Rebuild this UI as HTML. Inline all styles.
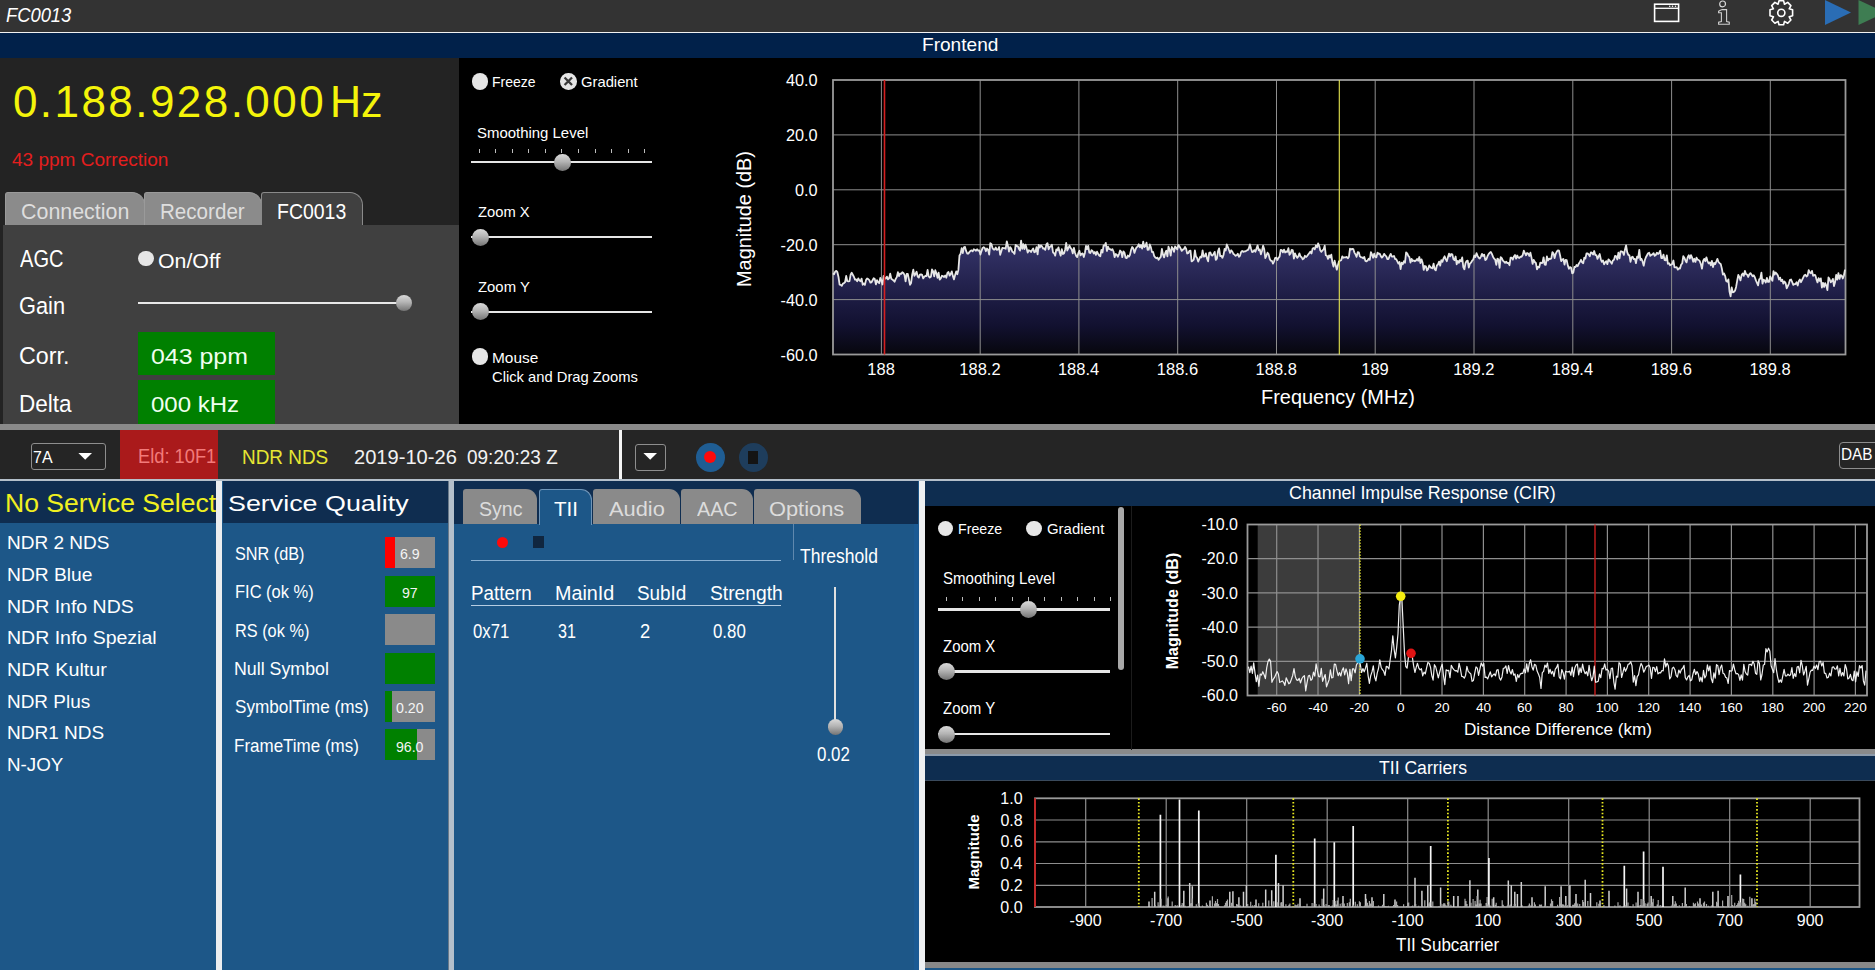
<!DOCTYPE html>
<html><head><meta charset="utf-8"><style>
html,body{margin:0;padding:0;width:1875px;height:970px;overflow:hidden;background:#000}
body{position:relative;font-family:"Liberation Sans",sans-serif}
.r{position:absolute;box-sizing:content-box}
.t{position:absolute;white-space:nowrap;line-height:normal;transform-origin:0 0;font-family:"Liberation Sans",sans-serif}
</style></head><body>
<div class="r" style="left:0px;top:0px;width:1875px;height:32px;background:#333333;"></div>
<div class="t" style="left:6.15px;top:3.93px;font-size:20.06px;color:#ffffff;transform:scaleX(0.9151);font-style:italic;">FC0013</div>
<div class="r" style="left:0px;top:32px;width:1875px;height:1px;background:#f2f2f2;"></div>
<svg class="r" style="left:1640px;top:0px" width="235" height="32" viewBox="1640 0 235 32">
<rect x="1654.6" y="4.2" width="24" height="17.2" fill="none" stroke="#fff" stroke-width="1.6"/>
<line x1="1654.6" y1="8.3" x2="1678.6" y2="8.3" stroke="#fff" stroke-width="1.3"/>
<circle cx="1669.7" cy="6.3" r="0.75" fill="#fff"/><circle cx="1672.5" cy="6.3" r="0.75" fill="#fff"/><circle cx="1675.5" cy="6.3" r="0.75" fill="#fff"/>
<circle cx="1722.6" cy="3.9" r="2.9" fill="none" stroke="#d8d8d8" stroke-width="1.2"/>
<path d="M1718.6 11.2 Q1720.5 10.2 1722.2 9.6 L1726.6 9.6 L1726.6 21.6 L1729.3 22.2 L1729.3 24.3 L1718.6 24.3 L1718.6 22.2 L1721.4 21.6 L1721.4 12.8 L1718.6 12.8 Z" fill="none" stroke="#d0d0d0" stroke-width="1.1"/>
<g transform="translate(1781.3 12.8)" fill="none" stroke="#fff" stroke-width="1.6" stroke-linejoin="round">
<path d="M-2.3 -12 L2.3 -12 L3.2 -8.6 L6.4 -10.4 L9.6 -7.2 L7.9 -4 L11.3 -3 L11.3 3 L7.9 4 L9.6 7.2 L6.4 10.4 L3.2 8.6 L2.3 12 L-2.3 12 L-3.2 8.6 L-6.4 10.4 L-9.6 7.2 L-7.9 4 L-11.3 3 L-11.3 -3 L-7.9 -4 L-9.6 -7.2 L-6.4 -10.4 L-3.2 -8.6 Z"/>
<circle cx="0" cy="0" r="3.6"/>
</g>
<path d="M1825 0 L1851 12.5 L1825 25 Z" fill="#2a6db5"/>
<path d="M1858.5 0 L1885 12.5 L1858.5 25 Z" fill="#3e7d52"/>
</svg>
<div class="r" style="left:0px;top:33px;width:1875px;height:25px;background:#01214a;"></div>
<div class="t" style="left:922.00px;top:33.96px;font-size:19.04px;color:#ffffff;transform:scaleX(1.0027);">Frontend</div>
<div class="r" style="left:0px;top:58px;width:1875px;height:366px;background:#000000;"></div>
<div class="r" style="left:0px;top:58px;width:459px;height:366px;background:#232323;"></div>
<div class="t" style="left:12.90px;top:77.18px;font-size:44px;letter-spacing:2.45px;color:#f4f40a">0.188.928.000</div>
<div class="t" style="left:330.38px;top:76.94px;font-size:44.04px;color:#f4f40a;transform:scaleX(0.9771);">Hz</div>
<div class="t" style="left:12.38px;top:150.20px;font-size:18.02px;color:#e41e1e;transform:scaleX(1.0553);">43 ppm Correction</div>
<div class="r" style="left:5px;top:192px;width:138px;height:33px;background:#8b8b8b;border:1px solid #9a9a9a;border-bottom:none;border-radius:3px 13px 0 0"></div>
<div class="r" style="left:144px;top:192px;width:116px;height:33px;background:#8b8b8b;border:1px solid #9a9a9a;border-bottom:none;border-radius:3px 13px 0 0"></div>
<div class="r" style="left:261px;top:192px;width:100px;height:34px;background:#404040;border:1px solid #8a8a8a;border-bottom:none;border-radius:3px 13px 0 0"></div>
<div class="t" style="left:20.80px;top:200.12px;font-size:21.37px;color:#dedede;transform:scaleX(1.0028);">Connection</div>
<div class="t" style="left:160.26px;top:200.12px;font-size:21.37px;color:#dedede;transform:scaleX(0.9640);">Recorder</div>
<div class="t" style="left:276.85px;top:200.12px;font-size:21.37px;color:#ffffff;transform:scaleX(0.9116);">FC0013</div>
<div class="r" style="left:3px;top:225px;width:456px;height:199px;background:#404040;"></div>
<div class="t" style="left:20.41px;top:246.01px;font-size:23.55px;color:#ffffff;transform:scaleX(0.8520);">AGC</div>
<div class="t" style="left:19.39px;top:293.41px;font-size:23.55px;color:#ffffff;transform:scaleX(0.9255);">Gain</div>
<div class="t" style="left:19.32px;top:342.81px;font-size:23.55px;color:#ffffff;transform:scaleX(0.9874);">Corr.</div>
<div class="t" style="left:18.98px;top:390.81px;font-size:23.55px;color:#ffffff;transform:scaleX(0.9566);">Delta</div>
<div class="r" style="left:138px;top:250.7px;width:15.8px;height:15.8px;border-radius:50%;background:#e6e6e6"></div>
<div class="t" style="left:158.36px;top:249.22px;font-size:20.49px;color:#ffffff;transform:scaleX(1.0407);">On/Off</div>
<div class="r" style="left:137.6px;top:301.8px;width:262.4px;height:2.599999999999966px;background:#e8e8e8;"></div>
<div class="r" style="left:396px;top:295px;width:16px;height:16px;border-radius:50%;background:linear-gradient(to bottom,#dadada 0%,#b4b4b4 45%,#747474 100%)"></div>
<div class="r" style="left:137.9px;top:332.2px;width:137.6px;height:42.69999999999999px;background:#008000;"></div>
<div class="r" style="left:137.9px;top:380.2px;width:137.6px;height:43.80000000000001px;background:#008000;"></div>
<div class="t" style="left:151.01px;top:342.72px;font-size:22.67px;color:#f0fff0;transform:scaleX(1.0990);">043 ppm</div>
<div class="t" style="left:151.05px;top:391.12px;font-size:22.67px;color:#f0fff0;transform:scaleX(1.0591);">000 kHz</div>
<div class="r" style="left:471.50px;top:73.40px;width:16.60px;height:16.60px;border-radius:50%;background:#e6e6e6"></div>
<div class="t" style="left:491.83px;top:72.98px;font-size:15.55px;color:#ffffff;transform:scaleX(0.9013);">Freeze</div>
<div class="r" style="left:560.00px;top:73.40px;width:16.60px;height:16.60px;border-radius:50%;background:#e6e6e6"></div>
<svg class="r" style="left:560.00px;top:73.40px" width="16.60" height="16.60" viewBox="-8 -8 16 16"><path d="M-3.6 -3.6 L3.6 3.6 M3.6 -3.6 L-3.6 3.6" stroke="#3a3a3a" stroke-width="2.2"/></svg>
<div class="t" style="left:581.24px;top:72.98px;font-size:15.55px;color:#ffffff;transform:scaleX(0.9508);">Gradient</div>
<div class="t" style="left:477.23px;top:124.48px;font-size:15.55px;color:#ffffff;transform:scaleX(0.9607);">Smoothing Level</div>
<div class="r" style="left:479px;top:148.5px;width:1px;height:4.0px;background:#bdbdbd;"></div>
<div class="r" style="left:495px;top:148.5px;width:1px;height:4.0px;background:#bdbdbd;"></div>
<div class="r" style="left:512px;top:148.5px;width:1px;height:4.0px;background:#bdbdbd;"></div>
<div class="r" style="left:528px;top:148.5px;width:1px;height:4.0px;background:#bdbdbd;"></div>
<div class="r" style="left:545px;top:148.5px;width:1px;height:4.0px;background:#bdbdbd;"></div>
<div class="r" style="left:561px;top:148.5px;width:1px;height:4.0px;background:#bdbdbd;"></div>
<div class="r" style="left:578px;top:148.5px;width:1px;height:4.0px;background:#bdbdbd;"></div>
<div class="r" style="left:595px;top:148.5px;width:1px;height:4.0px;background:#bdbdbd;"></div>
<div class="r" style="left:611px;top:148.5px;width:1px;height:4.0px;background:#bdbdbd;"></div>
<div class="r" style="left:628px;top:148.5px;width:1px;height:4.0px;background:#bdbdbd;"></div>
<div class="r" style="left:644px;top:148.5px;width:1px;height:4.0px;background:#bdbdbd;"></div>
<div class="r" style="left:471.4px;top:160.8px;width:180.89999999999998px;height:2.0999999999999943px;background:#e6e6e6;"></div>
<div class="r" style="left:554.00px;top:154.00px;width:16.60px;height:16.60px;border-radius:50%;background:linear-gradient(to bottom,#dadada 0%,#b4b4b4 45%,#747474 100%)"></div>
<div class="t" style="left:477.53px;top:203.48px;font-size:15.55px;color:#ffffff;transform:scaleX(0.9480);">Zoom X</div>
<div class="r" style="left:471.4px;top:235.7px;width:180.89999999999998px;height:2.5px;background:#e6e6e6;"></div>
<div class="r" style="left:471.50px;top:228.50px;width:17.00px;height:17.00px;border-radius:50%;background:linear-gradient(to bottom,#dadada 0%,#b4b4b4 45%,#747474 100%)"></div>
<div class="t" style="left:477.52px;top:278.01px;font-size:15.41px;color:#ffffff;transform:scaleX(0.9659);">Zoom Y</div>
<div class="r" style="left:471.4px;top:310.5px;width:180.89999999999998px;height:2.5px;background:#e6e6e6;"></div>
<div class="r" style="left:471.50px;top:303.30px;width:17.00px;height:17.00px;border-radius:50%;background:linear-gradient(to bottom,#dadada 0%,#b4b4b4 45%,#747474 100%)"></div>
<div class="r" style="left:471.70px;top:348.20px;width:16.60px;height:16.60px;border-radius:50%;background:#e6e6e6"></div>
<div class="t" style="left:491.71px;top:348.58px;font-size:15.55px;color:#ffffff;transform:scaleX(0.9933);">Mouse</div>
<div class="t" style="left:492.24px;top:368.28px;font-size:15.55px;color:#ffffff;transform:scaleX(0.9483);">Click and Drag Zooms</div>
<svg class="r" style="left:0;top:58px" width="1875" height="366" viewBox="0 58 1875 366">
<defs><linearGradient id="sg" gradientUnits="userSpaceOnUse" x1="0" y1="240" x2="0" y2="354"><stop offset="0" stop-color="#36356b"/><stop offset="0.25" stop-color="#2a2958"/><stop offset="0.53" stop-color="#1c1b42"/><stop offset="0.75" stop-color="#121130"/><stop offset="1" stop-color="#07070e"/></linearGradient></defs>
<path d="M833,354.5 L833.0,273.3 834.1,274.2 835.2,271.5 836.3,270.9 837.4,272.2 838.5,277.0 839.6,284.6 840.7,284.8 841.8,285.9 842.9,283.6 844.0,283.1 845.1,282.0 846.2,276.0 847.3,281.2 848.4,281.4 849.5,281.2 850.6,274.8 851.7,272.8 852.8,274.8 853.9,276.7 855.0,279.6 856.1,279.5 857.2,281.2 858.3,278.4 859.4,280.4 860.5,281.3 861.6,278.6 862.7,284.8 863.8,283.4 864.9,284.9 866.0,280.1 867.1,278.4 868.2,279.1 869.3,280.1 870.4,282.6 871.5,282.3 872.6,280.3 873.7,278.3 874.8,279.1 875.9,284.4 877.0,280.2 878.1,282.1 879.2,283.2 880.3,278.0 881.4,280.4 882.5,284.5 883.6,275.8 884.7,277.7 885.8,278.7 886.9,276.6 888.0,279.4 889.1,278.4 890.2,273.7 891.3,278.7 892.4,279.6 893.5,280.4 894.6,281.8 895.7,278.9 896.8,277.1 897.9,272.2 899.0,276.1 900.1,273.5 901.2,273.9 902.3,272.2 903.4,273.0 904.5,274.9 905.6,281.3 906.7,274.0 907.8,273.9 908.9,279.3 910.0,284.9 911.1,283.0 912.2,274.6 913.3,269.7 914.4,275.9 915.5,274.0 916.6,271.7 917.7,276.5 918.8,277.6 919.9,274.6 921.0,274.3 922.1,274.8 923.2,278.4 924.3,276.8 925.4,276.0 926.5,276.0 927.6,269.9 928.7,276.4 929.8,277.5 930.9,276.8 932.0,269.5 933.1,271.3 934.2,276.3 935.3,270.2 936.4,273.3 937.5,277.9 938.6,272.6 939.7,279.7 940.8,278.5 941.9,275.8 943.0,276.2 944.1,277.0 945.2,275.4 946.3,277.7 947.4,272.9 948.5,272.0 949.6,275.7 950.7,274.1 951.8,271.4 952.9,276.1 954.0,279.4 955.1,275.1 956.2,271.4 957.3,274.2 958.4,269.9 959.5,255.4 960.6,253.7 961.7,248.1 962.8,253.1 963.9,247.3 965.0,246.9 966.1,250.9 967.2,253.5 968.3,253.6 969.4,252.1 970.5,250.9 971.6,250.4 972.7,251.4 973.8,249.3 974.9,249.8 976.0,250.7 977.1,249.2 978.2,250.7 979.3,250.5 980.4,254.6 981.5,251.1 982.6,247.9 983.7,247.2 984.8,248.1 985.9,251.2 987.0,248.5 988.1,249.9 989.2,254.6 990.3,243.2 991.4,243.9 992.5,248.0 993.6,249.6 994.7,249.5 995.8,247.5 996.9,249.9 998.0,249.5 999.1,247.0 1000.2,254.8 1001.3,251.3 1002.4,247.8 1003.5,248.2 1004.6,248.1 1005.7,248.7 1006.8,241.3 1007.9,245.8 1009.0,251.6 1010.1,247.1 1011.2,248.6 1012.3,251.8 1013.4,252.2 1014.5,253.9 1015.6,245.0 1016.7,246.0 1017.8,246.1 1018.9,248.7 1020.0,250.6 1021.1,240.6 1022.2,248.8 1023.3,244.1 1024.4,249.1 1025.5,244.6 1026.6,248.3 1027.7,252.6 1028.8,250.2 1029.9,250.7 1031.0,252.0 1032.1,250.1 1033.2,248.5 1034.3,252.3 1035.4,251.7 1036.5,247.2 1037.6,254.3 1038.7,244.8 1039.8,247.5 1040.9,245.4 1042.0,246.4 1043.1,248.7 1044.2,248.4 1045.3,249.9 1046.4,244.4 1047.5,243.2 1048.6,249.4 1049.7,247.1 1050.8,246.3 1051.9,244.8 1053.0,252.4 1054.1,253.2 1055.2,255.6 1056.3,249.4 1057.4,250.4 1058.5,247.4 1059.6,252.2 1060.7,255.7 1061.8,249.2 1062.9,254.0 1064.0,253.5 1065.1,249.7 1066.2,243.0 1067.3,250.5 1068.4,248.1 1069.5,245.6 1070.6,248.0 1071.7,249.4 1072.8,253.4 1073.9,247.8 1075.0,252.8 1076.1,255.8 1077.2,257.1 1078.3,253.2 1079.4,250.8 1080.5,255.4 1081.6,253.9 1082.7,253.4 1083.8,257.0 1084.9,253.0 1086.0,245.9 1087.1,249.2 1088.2,245.9 1089.3,252.6 1090.4,253.0 1091.5,250.2 1092.6,251.0 1093.7,253.5 1094.8,252.0 1095.9,254.9 1097.0,251.7 1098.1,253.7 1099.2,255.5 1100.3,256.3 1101.4,249.9 1102.5,252.5 1103.6,245.3 1104.7,245.5 1105.8,242.9 1106.9,251.0 1108.0,246.7 1109.1,249.0 1110.2,249.2 1111.3,250.2 1112.4,249.1 1113.5,251.5 1114.6,257.1 1115.7,254.0 1116.8,254.8 1117.9,256.7 1119.0,254.1 1120.1,250.5 1121.2,251.8 1122.3,257.2 1123.4,251.3 1124.5,252.8 1125.6,257.7 1126.7,258.1 1127.8,255.5 1128.9,256.7 1130.0,254.8 1131.1,249.9 1132.2,247.0 1133.3,248.4 1134.4,252.9 1135.5,249.6 1136.6,247.2 1137.7,246.7 1138.8,244.2 1139.9,247.3 1141.0,245.0 1142.1,248.6 1143.2,241.6 1144.3,247.1 1145.4,246.1 1146.5,242.7 1147.6,249.9 1148.7,249.7 1149.8,244.5 1150.9,247.4 1152.0,252.1 1153.1,251.9 1154.2,255.9 1155.3,257.6 1156.4,258.3 1157.5,257.6 1158.6,259.8 1159.7,258.2 1160.8,256.9 1161.9,248.8 1163.0,254.7 1164.1,257.4 1165.2,253.2 1166.3,250.7 1167.4,256.3 1168.5,246.7 1169.6,249.6 1170.7,255.6 1171.8,247.0 1172.9,248.5 1174.0,251.8 1175.1,246.5 1176.2,247.7 1177.3,249.4 1178.4,245.0 1179.5,246.5 1180.6,248.4 1181.7,250.9 1182.8,249.6 1183.9,249.1 1185.0,246.9 1186.1,248.8 1187.2,253.5 1188.3,253.2 1189.4,250.9 1190.5,250.7 1191.6,261.4 1192.7,260.7 1193.8,259.6 1194.9,250.4 1196.0,256.7 1197.1,257.9 1198.2,261.6 1199.3,259.0 1200.4,256.6 1201.5,257.4 1202.6,250.4 1203.7,256.7 1204.8,256.4 1205.9,253.4 1207.0,258.4 1208.1,261.3 1209.2,252.8 1210.3,252.4 1211.4,255.1 1212.5,255.6 1213.6,254.0 1214.7,251.9 1215.8,259.8 1216.9,258.6 1218.0,251.4 1219.1,248.4 1220.2,256.0 1221.3,255.8 1222.4,257.8 1223.5,255.0 1224.6,249.0 1225.7,250.6 1226.8,244.5 1227.9,247.0 1229.0,250.0 1230.1,252.8 1231.2,250.3 1232.3,251.5 1233.4,253.9 1234.5,254.6 1235.6,255.8 1236.7,255.2 1237.8,253.7 1238.9,256.8 1240.0,255.8 1241.1,252.1 1242.2,251.0 1243.3,251.9 1244.4,251.4 1245.5,251.4 1246.6,250.5 1247.7,250.1 1248.8,248.6 1249.9,244.4 1251.0,248.6 1252.1,252.1 1253.2,251.7 1254.3,250.1 1255.4,251.8 1256.5,248.6 1257.6,245.3 1258.7,250.4 1259.8,249.4 1260.9,254.3 1262.0,250.8 1263.1,245.7 1264.2,249.1 1265.3,258.1 1266.4,255.8 1267.5,252.7 1268.6,254.1 1269.7,258.8 1270.8,260.7 1271.9,260.9 1273.0,263.6 1274.1,261.3 1275.2,257.8 1276.3,257.7 1277.4,260.0 1278.5,257.9 1279.6,256.7 1280.7,249.8 1281.8,250.1 1282.9,252.4 1284.0,249.7 1285.1,252.5 1286.2,251.5 1287.3,251.8 1288.4,248.2 1289.5,254.8 1290.6,253.4 1291.7,249.8 1292.8,250.4 1293.9,258.6 1295.0,253.3 1296.1,256.0 1297.2,257.9 1298.3,256.4 1299.4,253.4 1300.5,256.4 1301.6,257.2 1302.7,259.3 1303.8,258.6 1304.9,255.8 1306.0,257.0 1307.1,256.1 1308.2,254.5 1309.3,253.2 1310.4,251.6 1311.5,253.5 1312.6,248.6 1313.7,248.0 1314.8,249.3 1315.9,245.5 1317.0,247.4 1318.1,243.4 1319.2,246.0 1320.3,250.5 1321.4,251.8 1322.5,250.4 1323.6,249.4 1324.7,245.7 1325.8,255.3 1326.9,255.8 1328.0,258.9 1329.1,255.3 1330.2,257.5 1331.3,254.7 1332.4,262.6 1333.5,266.6 1334.6,260.6 1335.7,265.2 1336.8,269.7 1337.9,265.2 1339.0,261.3 1340.1,260.7 1341.2,260.2 1342.3,256.3 1343.4,257.8 1344.5,257.3 1345.6,257.3 1346.7,256.9 1347.8,258.3 1348.9,257.0 1350.0,248.7 1351.1,249.6 1352.2,248.8 1353.3,249.1 1354.4,252.6 1355.5,254.4 1356.6,256.9 1357.7,252.2 1358.8,252.3 1359.9,256.4 1361.0,257.3 1362.1,257.4 1363.2,258.4 1364.3,256.9 1365.4,260.9 1366.5,261.4 1367.6,260.5 1368.7,258.7 1369.8,259.9 1370.9,252.2 1372.0,254.5 1373.1,257.7 1374.2,253.7 1375.3,257.0 1376.4,257.3 1377.5,252.6 1378.6,253.9 1379.7,253.7 1380.8,256.1 1381.9,257.6 1383.0,256.4 1384.1,253.9 1385.2,255.4 1386.3,256.4 1387.4,259.2 1388.5,259.0 1389.6,256.2 1390.7,253.9 1391.8,256.5 1392.9,256.6 1394.0,255.9 1395.1,259.0 1396.2,259.2 1397.3,261.4 1398.4,263.6 1399.5,262.0 1400.6,269.0 1401.7,262.7 1402.8,264.3 1403.9,261.3 1405.0,262.7 1406.1,252.3 1407.2,253.3 1408.3,255.9 1409.4,257.1 1410.5,262.5 1411.6,258.9 1412.7,261.0 1413.8,260.5 1414.9,261.3 1416.0,260.6 1417.1,258.9 1418.2,260.7 1419.3,257.0 1420.4,263.0 1421.5,259.3 1422.6,262.7 1423.7,269.9 1424.8,266.0 1425.9,266.3 1427.0,270.5 1428.1,269.1 1429.2,265.4 1430.3,267.0 1431.4,268.0 1432.5,268.3 1433.6,263.7 1434.7,269.3 1435.8,270.3 1436.9,265.5 1438.0,264.4 1439.1,261.6 1440.2,265.7 1441.3,260.1 1442.4,261.9 1443.5,258.5 1444.6,256.3 1445.7,259.1 1446.8,261.2 1447.9,257.3 1449.0,253.7 1450.1,256.3 1451.2,254.0 1452.3,254.3 1453.4,259.1 1454.5,260.2 1455.6,256.5 1456.7,264.3 1457.8,260.8 1458.9,262.8 1460.0,260.0 1461.1,261.4 1462.2,257.4 1463.3,267.1 1464.4,269.3 1465.5,263.1 1466.6,261.0 1467.7,260.6 1468.8,267.5 1469.9,263.7 1471.0,262.7 1472.1,260.7 1473.2,259.7 1474.3,255.5 1475.4,257.0 1476.5,253.2 1477.6,255.9 1478.7,257.7 1479.8,258.5 1480.9,256.6 1482.0,253.9 1483.1,256.0 1484.2,254.7 1485.3,260.0 1486.4,259.2 1487.5,256.2 1488.6,254.1 1489.7,252.7 1490.8,252.0 1491.9,253.9 1493.0,256.7 1494.1,258.6 1495.2,259.7 1496.3,264.9 1497.4,258.7 1498.5,259.3 1499.6,267.9 1500.7,257.2 1501.8,258.1 1502.9,260.6 1504.0,261.6 1505.1,262.8 1506.2,261.6 1507.3,263.2 1508.4,263.0 1509.5,265.2 1510.6,257.7 1511.7,257.6 1512.8,259.6 1513.9,256.5 1515.0,255.0 1516.1,258.7 1517.2,255.5 1518.3,257.7 1519.4,258.0 1520.5,256.6 1521.6,256.8 1522.7,255.0 1523.8,250.6 1524.9,253.2 1526.0,255.3 1527.1,253.0 1528.2,253.5 1529.3,256.0 1530.4,252.7 1531.5,257.6 1532.6,263.9 1533.7,259.9 1534.8,262.0 1535.9,263.0 1537.0,269.4 1538.1,266.8 1539.2,267.4 1540.3,262.7 1541.4,263.0 1542.5,262.8 1543.6,257.3 1544.7,264.7 1545.8,264.8 1546.9,256.4 1548.0,260.5 1549.1,258.6 1550.2,259.1 1551.3,258.4 1552.4,252.2 1553.5,253.4 1554.6,258.1 1555.7,253.8 1556.8,251.6 1557.9,250.3 1559.0,250.6 1560.1,255.5 1561.2,261.2 1562.3,259.6 1563.4,258.9 1564.5,264.7 1565.6,259.9 1566.7,260.1 1567.8,265.4 1568.9,268.8 1570.0,267.1 1571.1,267.8 1572.2,273.3 1573.3,272.7 1574.4,266.8 1575.5,267.1 1576.6,265.0 1577.7,266.2 1578.8,263.7 1579.9,261.9 1581.0,259.8 1582.1,262.4 1583.2,263.3 1584.3,257.7 1585.4,258.6 1586.5,253.4 1587.6,253.4 1588.7,254.5 1589.8,256.2 1590.9,252.3 1592.0,252.9 1593.1,254.6 1594.2,251.0 1595.3,255.1 1596.4,255.1 1597.5,258.9 1598.6,256.4 1599.7,254.0 1600.8,259.3 1601.9,261.8 1603.0,260.4 1604.1,264.3 1605.2,262.4 1606.3,261.1 1607.4,264.1 1608.5,259.3 1609.6,260.6 1610.7,262.1 1611.8,263.8 1612.9,260.4 1614.0,259.7 1615.1,255.8 1616.2,256.3 1617.3,259.5 1618.4,252.6 1619.5,258.4 1620.6,251.3 1621.7,251.4 1622.8,252.1 1623.9,254.9 1625.0,249.4 1626.1,245.3 1627.2,252.1 1628.3,254.9 1629.4,255.4 1630.5,261.8 1631.6,257.4 1632.7,256.8 1633.8,259.2 1634.9,258.9 1636.0,263.2 1637.1,256.7 1638.2,257.9 1639.3,249.9 1640.4,260.0 1641.5,258.8 1642.6,261.7 1643.7,265.7 1644.8,260.2 1645.9,257.3 1647.0,255.3 1648.1,253.3 1649.2,252.8 1650.3,255.9 1651.4,254.9 1652.5,254.4 1653.6,253.2 1654.7,255.8 1655.8,255.0 1656.9,252.7 1658.0,254.0 1659.1,253.1 1660.2,250.6 1661.3,258.1 1662.4,258.1 1663.5,254.6 1664.6,260.2 1665.7,260.3 1666.8,255.4 1667.9,263.8 1669.0,263.2 1670.1,265.3 1671.2,264.6 1672.3,264.0 1673.4,260.5 1674.5,267.4 1675.6,267.4 1676.7,267.2 1677.8,269.6 1678.9,268.3 1680.0,268.6 1681.1,264.7 1682.2,263.5 1683.3,256.1 1684.4,257.9 1685.5,260.7 1686.6,262.4 1687.7,257.1 1688.8,255.2 1689.9,258.6 1691.0,255.1 1692.1,257.7 1693.2,261.8 1694.3,258.8 1695.4,261.9 1696.5,257.7 1697.6,259.7 1698.7,260.0 1699.8,261.2 1700.9,264.2 1702.0,268.7 1703.1,261.0 1704.2,258.9 1705.3,261.2 1706.4,257.3 1707.5,261.1 1708.6,263.4 1709.7,262.4 1710.8,265.3 1711.9,260.8 1713.0,267.0 1714.1,262.9 1715.2,264.1 1716.3,261.5 1717.4,258.9 1718.5,262.0 1719.6,263.2 1720.7,263.9 1721.8,268.4 1722.9,274.5 1724.0,273.4 1725.1,275.8 1726.2,281.0 1727.3,281.7 1728.4,279.4 1729.5,291.5 1730.6,296.3 1731.7,287.5 1732.8,292.4 1733.9,292.0 1735.0,290.7 1736.1,286.9 1737.2,280.6 1738.3,274.9 1739.4,277.2 1740.5,280.4 1741.6,275.1 1742.7,273.5 1743.8,275.9 1744.9,270.9 1746.0,274.1 1747.1,274.5 1748.2,277.0 1749.3,274.3 1750.4,273.1 1751.5,274.5 1752.6,276.3 1753.7,275.3 1754.8,277.3 1755.9,280.4 1757.0,282.8 1758.1,285.4 1759.2,279.3 1760.3,278.7 1761.4,272.7 1762.5,283.7 1763.6,279.6 1764.7,280.5 1765.8,282.5 1766.9,277.9 1768.0,281.9 1769.1,281.8 1770.2,276.3 1771.3,278.9 1772.4,280.8 1773.5,271.1 1774.6,274.6 1775.7,272.5 1776.8,273.8 1777.9,275.5 1779.0,279.6 1780.1,277.6 1781.2,281.2 1782.3,279.7 1783.4,283.7 1784.5,281.5 1785.6,283.0 1786.7,288.4 1787.8,286.2 1788.9,283.6 1790.0,279.8 1791.1,279.5 1792.2,282.1 1793.3,284.9 1794.4,284.1 1795.5,284.0 1796.6,282.2 1797.7,285.5 1798.8,281.3 1799.9,279.5 1801.0,282.2 1802.1,279.9 1803.2,277.6 1804.3,275.3 1805.4,274.8 1806.5,276.6 1807.6,275.6 1808.7,270.1 1809.8,272.5 1810.9,273.3 1812.0,270.9 1813.1,275.9 1814.2,275.0 1815.3,275.2 1816.4,279.1 1817.5,282.4 1818.6,278.2 1819.7,280.8 1820.8,278.4 1821.9,287.6 1823.0,282.8 1824.1,286.9 1825.2,283.1 1826.3,285.6 1827.4,290.1 1828.5,277.4 1829.6,279.3 1830.7,282.3 1831.8,281.2 1832.9,278.9 1834.0,286.1 1835.1,281.9 1836.2,275.0 1837.3,279.7 1838.4,273.1 1839.5,278.9 1840.6,275.2 1841.7,275.6 1842.8,278.5 1843.9,275.5 1845.0,269.7 L1845.5,354.5 Z" fill="url(#sg)"/>
<path d="M833,134.9 H1845.5 M833,189.8 H1845.5 M833,244.7 H1845.5 M833,299.6 H1845.5 M881.4,80 V354.5 M980.2,80 V354.5 M1078.9,80 V354.5 M1177.7,80 V354.5 M1276.5,80 V354.5 M1375.2,80 V354.5 M1474.0,80 V354.5 M1572.8,80 V354.5 M1671.6,80 V354.5 M1770.3,80 V354.5" stroke="#8e8e8e" stroke-width="1" fill="none"/>
<rect x="833" y="80" width="1012.5" height="274.5" fill="none" stroke="#9a9a9a" stroke-width="1.8"/>
<polyline points="833.0,273.3 834.1,274.2 835.2,271.5 836.3,270.9 837.4,272.2 838.5,277.0 839.6,284.6 840.7,284.8 841.8,285.9 842.9,283.6 844.0,283.1 845.1,282.0 846.2,276.0 847.3,281.2 848.4,281.4 849.5,281.2 850.6,274.8 851.7,272.8 852.8,274.8 853.9,276.7 855.0,279.6 856.1,279.5 857.2,281.2 858.3,278.4 859.4,280.4 860.5,281.3 861.6,278.6 862.7,284.8 863.8,283.4 864.9,284.9 866.0,280.1 867.1,278.4 868.2,279.1 869.3,280.1 870.4,282.6 871.5,282.3 872.6,280.3 873.7,278.3 874.8,279.1 875.9,284.4 877.0,280.2 878.1,282.1 879.2,283.2 880.3,278.0 881.4,280.4 882.5,284.5 883.6,275.8 884.7,277.7 885.8,278.7 886.9,276.6 888.0,279.4 889.1,278.4 890.2,273.7 891.3,278.7 892.4,279.6 893.5,280.4 894.6,281.8 895.7,278.9 896.8,277.1 897.9,272.2 899.0,276.1 900.1,273.5 901.2,273.9 902.3,272.2 903.4,273.0 904.5,274.9 905.6,281.3 906.7,274.0 907.8,273.9 908.9,279.3 910.0,284.9 911.1,283.0 912.2,274.6 913.3,269.7 914.4,275.9 915.5,274.0 916.6,271.7 917.7,276.5 918.8,277.6 919.9,274.6 921.0,274.3 922.1,274.8 923.2,278.4 924.3,276.8 925.4,276.0 926.5,276.0 927.6,269.9 928.7,276.4 929.8,277.5 930.9,276.8 932.0,269.5 933.1,271.3 934.2,276.3 935.3,270.2 936.4,273.3 937.5,277.9 938.6,272.6 939.7,279.7 940.8,278.5 941.9,275.8 943.0,276.2 944.1,277.0 945.2,275.4 946.3,277.7 947.4,272.9 948.5,272.0 949.6,275.7 950.7,274.1 951.8,271.4 952.9,276.1 954.0,279.4 955.1,275.1 956.2,271.4 957.3,274.2 958.4,269.9 959.5,255.4 960.6,253.7 961.7,248.1 962.8,253.1 963.9,247.3 965.0,246.9 966.1,250.9 967.2,253.5 968.3,253.6 969.4,252.1 970.5,250.9 971.6,250.4 972.7,251.4 973.8,249.3 974.9,249.8 976.0,250.7 977.1,249.2 978.2,250.7 979.3,250.5 980.4,254.6 981.5,251.1 982.6,247.9 983.7,247.2 984.8,248.1 985.9,251.2 987.0,248.5 988.1,249.9 989.2,254.6 990.3,243.2 991.4,243.9 992.5,248.0 993.6,249.6 994.7,249.5 995.8,247.5 996.9,249.9 998.0,249.5 999.1,247.0 1000.2,254.8 1001.3,251.3 1002.4,247.8 1003.5,248.2 1004.6,248.1 1005.7,248.7 1006.8,241.3 1007.9,245.8 1009.0,251.6 1010.1,247.1 1011.2,248.6 1012.3,251.8 1013.4,252.2 1014.5,253.9 1015.6,245.0 1016.7,246.0 1017.8,246.1 1018.9,248.7 1020.0,250.6 1021.1,240.6 1022.2,248.8 1023.3,244.1 1024.4,249.1 1025.5,244.6 1026.6,248.3 1027.7,252.6 1028.8,250.2 1029.9,250.7 1031.0,252.0 1032.1,250.1 1033.2,248.5 1034.3,252.3 1035.4,251.7 1036.5,247.2 1037.6,254.3 1038.7,244.8 1039.8,247.5 1040.9,245.4 1042.0,246.4 1043.1,248.7 1044.2,248.4 1045.3,249.9 1046.4,244.4 1047.5,243.2 1048.6,249.4 1049.7,247.1 1050.8,246.3 1051.9,244.8 1053.0,252.4 1054.1,253.2 1055.2,255.6 1056.3,249.4 1057.4,250.4 1058.5,247.4 1059.6,252.2 1060.7,255.7 1061.8,249.2 1062.9,254.0 1064.0,253.5 1065.1,249.7 1066.2,243.0 1067.3,250.5 1068.4,248.1 1069.5,245.6 1070.6,248.0 1071.7,249.4 1072.8,253.4 1073.9,247.8 1075.0,252.8 1076.1,255.8 1077.2,257.1 1078.3,253.2 1079.4,250.8 1080.5,255.4 1081.6,253.9 1082.7,253.4 1083.8,257.0 1084.9,253.0 1086.0,245.9 1087.1,249.2 1088.2,245.9 1089.3,252.6 1090.4,253.0 1091.5,250.2 1092.6,251.0 1093.7,253.5 1094.8,252.0 1095.9,254.9 1097.0,251.7 1098.1,253.7 1099.2,255.5 1100.3,256.3 1101.4,249.9 1102.5,252.5 1103.6,245.3 1104.7,245.5 1105.8,242.9 1106.9,251.0 1108.0,246.7 1109.1,249.0 1110.2,249.2 1111.3,250.2 1112.4,249.1 1113.5,251.5 1114.6,257.1 1115.7,254.0 1116.8,254.8 1117.9,256.7 1119.0,254.1 1120.1,250.5 1121.2,251.8 1122.3,257.2 1123.4,251.3 1124.5,252.8 1125.6,257.7 1126.7,258.1 1127.8,255.5 1128.9,256.7 1130.0,254.8 1131.1,249.9 1132.2,247.0 1133.3,248.4 1134.4,252.9 1135.5,249.6 1136.6,247.2 1137.7,246.7 1138.8,244.2 1139.9,247.3 1141.0,245.0 1142.1,248.6 1143.2,241.6 1144.3,247.1 1145.4,246.1 1146.5,242.7 1147.6,249.9 1148.7,249.7 1149.8,244.5 1150.9,247.4 1152.0,252.1 1153.1,251.9 1154.2,255.9 1155.3,257.6 1156.4,258.3 1157.5,257.6 1158.6,259.8 1159.7,258.2 1160.8,256.9 1161.9,248.8 1163.0,254.7 1164.1,257.4 1165.2,253.2 1166.3,250.7 1167.4,256.3 1168.5,246.7 1169.6,249.6 1170.7,255.6 1171.8,247.0 1172.9,248.5 1174.0,251.8 1175.1,246.5 1176.2,247.7 1177.3,249.4 1178.4,245.0 1179.5,246.5 1180.6,248.4 1181.7,250.9 1182.8,249.6 1183.9,249.1 1185.0,246.9 1186.1,248.8 1187.2,253.5 1188.3,253.2 1189.4,250.9 1190.5,250.7 1191.6,261.4 1192.7,260.7 1193.8,259.6 1194.9,250.4 1196.0,256.7 1197.1,257.9 1198.2,261.6 1199.3,259.0 1200.4,256.6 1201.5,257.4 1202.6,250.4 1203.7,256.7 1204.8,256.4 1205.9,253.4 1207.0,258.4 1208.1,261.3 1209.2,252.8 1210.3,252.4 1211.4,255.1 1212.5,255.6 1213.6,254.0 1214.7,251.9 1215.8,259.8 1216.9,258.6 1218.0,251.4 1219.1,248.4 1220.2,256.0 1221.3,255.8 1222.4,257.8 1223.5,255.0 1224.6,249.0 1225.7,250.6 1226.8,244.5 1227.9,247.0 1229.0,250.0 1230.1,252.8 1231.2,250.3 1232.3,251.5 1233.4,253.9 1234.5,254.6 1235.6,255.8 1236.7,255.2 1237.8,253.7 1238.9,256.8 1240.0,255.8 1241.1,252.1 1242.2,251.0 1243.3,251.9 1244.4,251.4 1245.5,251.4 1246.6,250.5 1247.7,250.1 1248.8,248.6 1249.9,244.4 1251.0,248.6 1252.1,252.1 1253.2,251.7 1254.3,250.1 1255.4,251.8 1256.5,248.6 1257.6,245.3 1258.7,250.4 1259.8,249.4 1260.9,254.3 1262.0,250.8 1263.1,245.7 1264.2,249.1 1265.3,258.1 1266.4,255.8 1267.5,252.7 1268.6,254.1 1269.7,258.8 1270.8,260.7 1271.9,260.9 1273.0,263.6 1274.1,261.3 1275.2,257.8 1276.3,257.7 1277.4,260.0 1278.5,257.9 1279.6,256.7 1280.7,249.8 1281.8,250.1 1282.9,252.4 1284.0,249.7 1285.1,252.5 1286.2,251.5 1287.3,251.8 1288.4,248.2 1289.5,254.8 1290.6,253.4 1291.7,249.8 1292.8,250.4 1293.9,258.6 1295.0,253.3 1296.1,256.0 1297.2,257.9 1298.3,256.4 1299.4,253.4 1300.5,256.4 1301.6,257.2 1302.7,259.3 1303.8,258.6 1304.9,255.8 1306.0,257.0 1307.1,256.1 1308.2,254.5 1309.3,253.2 1310.4,251.6 1311.5,253.5 1312.6,248.6 1313.7,248.0 1314.8,249.3 1315.9,245.5 1317.0,247.4 1318.1,243.4 1319.2,246.0 1320.3,250.5 1321.4,251.8 1322.5,250.4 1323.6,249.4 1324.7,245.7 1325.8,255.3 1326.9,255.8 1328.0,258.9 1329.1,255.3 1330.2,257.5 1331.3,254.7 1332.4,262.6 1333.5,266.6 1334.6,260.6 1335.7,265.2 1336.8,269.7 1337.9,265.2 1339.0,261.3 1340.1,260.7 1341.2,260.2 1342.3,256.3 1343.4,257.8 1344.5,257.3 1345.6,257.3 1346.7,256.9 1347.8,258.3 1348.9,257.0 1350.0,248.7 1351.1,249.6 1352.2,248.8 1353.3,249.1 1354.4,252.6 1355.5,254.4 1356.6,256.9 1357.7,252.2 1358.8,252.3 1359.9,256.4 1361.0,257.3 1362.1,257.4 1363.2,258.4 1364.3,256.9 1365.4,260.9 1366.5,261.4 1367.6,260.5 1368.7,258.7 1369.8,259.9 1370.9,252.2 1372.0,254.5 1373.1,257.7 1374.2,253.7 1375.3,257.0 1376.4,257.3 1377.5,252.6 1378.6,253.9 1379.7,253.7 1380.8,256.1 1381.9,257.6 1383.0,256.4 1384.1,253.9 1385.2,255.4 1386.3,256.4 1387.4,259.2 1388.5,259.0 1389.6,256.2 1390.7,253.9 1391.8,256.5 1392.9,256.6 1394.0,255.9 1395.1,259.0 1396.2,259.2 1397.3,261.4 1398.4,263.6 1399.5,262.0 1400.6,269.0 1401.7,262.7 1402.8,264.3 1403.9,261.3 1405.0,262.7 1406.1,252.3 1407.2,253.3 1408.3,255.9 1409.4,257.1 1410.5,262.5 1411.6,258.9 1412.7,261.0 1413.8,260.5 1414.9,261.3 1416.0,260.6 1417.1,258.9 1418.2,260.7 1419.3,257.0 1420.4,263.0 1421.5,259.3 1422.6,262.7 1423.7,269.9 1424.8,266.0 1425.9,266.3 1427.0,270.5 1428.1,269.1 1429.2,265.4 1430.3,267.0 1431.4,268.0 1432.5,268.3 1433.6,263.7 1434.7,269.3 1435.8,270.3 1436.9,265.5 1438.0,264.4 1439.1,261.6 1440.2,265.7 1441.3,260.1 1442.4,261.9 1443.5,258.5 1444.6,256.3 1445.7,259.1 1446.8,261.2 1447.9,257.3 1449.0,253.7 1450.1,256.3 1451.2,254.0 1452.3,254.3 1453.4,259.1 1454.5,260.2 1455.6,256.5 1456.7,264.3 1457.8,260.8 1458.9,262.8 1460.0,260.0 1461.1,261.4 1462.2,257.4 1463.3,267.1 1464.4,269.3 1465.5,263.1 1466.6,261.0 1467.7,260.6 1468.8,267.5 1469.9,263.7 1471.0,262.7 1472.1,260.7 1473.2,259.7 1474.3,255.5 1475.4,257.0 1476.5,253.2 1477.6,255.9 1478.7,257.7 1479.8,258.5 1480.9,256.6 1482.0,253.9 1483.1,256.0 1484.2,254.7 1485.3,260.0 1486.4,259.2 1487.5,256.2 1488.6,254.1 1489.7,252.7 1490.8,252.0 1491.9,253.9 1493.0,256.7 1494.1,258.6 1495.2,259.7 1496.3,264.9 1497.4,258.7 1498.5,259.3 1499.6,267.9 1500.7,257.2 1501.8,258.1 1502.9,260.6 1504.0,261.6 1505.1,262.8 1506.2,261.6 1507.3,263.2 1508.4,263.0 1509.5,265.2 1510.6,257.7 1511.7,257.6 1512.8,259.6 1513.9,256.5 1515.0,255.0 1516.1,258.7 1517.2,255.5 1518.3,257.7 1519.4,258.0 1520.5,256.6 1521.6,256.8 1522.7,255.0 1523.8,250.6 1524.9,253.2 1526.0,255.3 1527.1,253.0 1528.2,253.5 1529.3,256.0 1530.4,252.7 1531.5,257.6 1532.6,263.9 1533.7,259.9 1534.8,262.0 1535.9,263.0 1537.0,269.4 1538.1,266.8 1539.2,267.4 1540.3,262.7 1541.4,263.0 1542.5,262.8 1543.6,257.3 1544.7,264.7 1545.8,264.8 1546.9,256.4 1548.0,260.5 1549.1,258.6 1550.2,259.1 1551.3,258.4 1552.4,252.2 1553.5,253.4 1554.6,258.1 1555.7,253.8 1556.8,251.6 1557.9,250.3 1559.0,250.6 1560.1,255.5 1561.2,261.2 1562.3,259.6 1563.4,258.9 1564.5,264.7 1565.6,259.9 1566.7,260.1 1567.8,265.4 1568.9,268.8 1570.0,267.1 1571.1,267.8 1572.2,273.3 1573.3,272.7 1574.4,266.8 1575.5,267.1 1576.6,265.0 1577.7,266.2 1578.8,263.7 1579.9,261.9 1581.0,259.8 1582.1,262.4 1583.2,263.3 1584.3,257.7 1585.4,258.6 1586.5,253.4 1587.6,253.4 1588.7,254.5 1589.8,256.2 1590.9,252.3 1592.0,252.9 1593.1,254.6 1594.2,251.0 1595.3,255.1 1596.4,255.1 1597.5,258.9 1598.6,256.4 1599.7,254.0 1600.8,259.3 1601.9,261.8 1603.0,260.4 1604.1,264.3 1605.2,262.4 1606.3,261.1 1607.4,264.1 1608.5,259.3 1609.6,260.6 1610.7,262.1 1611.8,263.8 1612.9,260.4 1614.0,259.7 1615.1,255.8 1616.2,256.3 1617.3,259.5 1618.4,252.6 1619.5,258.4 1620.6,251.3 1621.7,251.4 1622.8,252.1 1623.9,254.9 1625.0,249.4 1626.1,245.3 1627.2,252.1 1628.3,254.9 1629.4,255.4 1630.5,261.8 1631.6,257.4 1632.7,256.8 1633.8,259.2 1634.9,258.9 1636.0,263.2 1637.1,256.7 1638.2,257.9 1639.3,249.9 1640.4,260.0 1641.5,258.8 1642.6,261.7 1643.7,265.7 1644.8,260.2 1645.9,257.3 1647.0,255.3 1648.1,253.3 1649.2,252.8 1650.3,255.9 1651.4,254.9 1652.5,254.4 1653.6,253.2 1654.7,255.8 1655.8,255.0 1656.9,252.7 1658.0,254.0 1659.1,253.1 1660.2,250.6 1661.3,258.1 1662.4,258.1 1663.5,254.6 1664.6,260.2 1665.7,260.3 1666.8,255.4 1667.9,263.8 1669.0,263.2 1670.1,265.3 1671.2,264.6 1672.3,264.0 1673.4,260.5 1674.5,267.4 1675.6,267.4 1676.7,267.2 1677.8,269.6 1678.9,268.3 1680.0,268.6 1681.1,264.7 1682.2,263.5 1683.3,256.1 1684.4,257.9 1685.5,260.7 1686.6,262.4 1687.7,257.1 1688.8,255.2 1689.9,258.6 1691.0,255.1 1692.1,257.7 1693.2,261.8 1694.3,258.8 1695.4,261.9 1696.5,257.7 1697.6,259.7 1698.7,260.0 1699.8,261.2 1700.9,264.2 1702.0,268.7 1703.1,261.0 1704.2,258.9 1705.3,261.2 1706.4,257.3 1707.5,261.1 1708.6,263.4 1709.7,262.4 1710.8,265.3 1711.9,260.8 1713.0,267.0 1714.1,262.9 1715.2,264.1 1716.3,261.5 1717.4,258.9 1718.5,262.0 1719.6,263.2 1720.7,263.9 1721.8,268.4 1722.9,274.5 1724.0,273.4 1725.1,275.8 1726.2,281.0 1727.3,281.7 1728.4,279.4 1729.5,291.5 1730.6,296.3 1731.7,287.5 1732.8,292.4 1733.9,292.0 1735.0,290.7 1736.1,286.9 1737.2,280.6 1738.3,274.9 1739.4,277.2 1740.5,280.4 1741.6,275.1 1742.7,273.5 1743.8,275.9 1744.9,270.9 1746.0,274.1 1747.1,274.5 1748.2,277.0 1749.3,274.3 1750.4,273.1 1751.5,274.5 1752.6,276.3 1753.7,275.3 1754.8,277.3 1755.9,280.4 1757.0,282.8 1758.1,285.4 1759.2,279.3 1760.3,278.7 1761.4,272.7 1762.5,283.7 1763.6,279.6 1764.7,280.5 1765.8,282.5 1766.9,277.9 1768.0,281.9 1769.1,281.8 1770.2,276.3 1771.3,278.9 1772.4,280.8 1773.5,271.1 1774.6,274.6 1775.7,272.5 1776.8,273.8 1777.9,275.5 1779.0,279.6 1780.1,277.6 1781.2,281.2 1782.3,279.7 1783.4,283.7 1784.5,281.5 1785.6,283.0 1786.7,288.4 1787.8,286.2 1788.9,283.6 1790.0,279.8 1791.1,279.5 1792.2,282.1 1793.3,284.9 1794.4,284.1 1795.5,284.0 1796.6,282.2 1797.7,285.5 1798.8,281.3 1799.9,279.5 1801.0,282.2 1802.1,279.9 1803.2,277.6 1804.3,275.3 1805.4,274.8 1806.5,276.6 1807.6,275.6 1808.7,270.1 1809.8,272.5 1810.9,273.3 1812.0,270.9 1813.1,275.9 1814.2,275.0 1815.3,275.2 1816.4,279.1 1817.5,282.4 1818.6,278.2 1819.7,280.8 1820.8,278.4 1821.9,287.6 1823.0,282.8 1824.1,286.9 1825.2,283.1 1826.3,285.6 1827.4,290.1 1828.5,277.4 1829.6,279.3 1830.7,282.3 1831.8,281.2 1832.9,278.9 1834.0,286.1 1835.1,281.9 1836.2,275.0 1837.3,279.7 1838.4,273.1 1839.5,278.9 1840.6,275.2 1841.7,275.6 1842.8,278.5 1843.9,275.5 1845.0,269.7" fill="none" stroke="#e6e6e6" stroke-width="1.8" stroke-linejoin="round"/>
<line x1="884.5" y1="80" x2="884.5" y2="354.5" stroke="#d42020" stroke-width="1.6"/>
<line x1="1339.3" y1="80" x2="1339.3" y2="354.5" stroke="#e6e650" stroke-width="1.1"/>
</svg>
<div class="t" style="left:785.90px;top:71.19px;font-size:16.30px;color:#ffffff;">40.0</div>
<div class="t" style="left:785.90px;top:126.09px;font-size:16.30px;color:#ffffff;">20.0</div>
<div class="t" style="left:795.00px;top:180.99px;font-size:16.30px;color:#ffffff;">0.0</div>
<div class="t" style="left:780.50px;top:235.89px;font-size:16.30px;color:#ffffff;">-20.0</div>
<div class="t" style="left:780.50px;top:290.79px;font-size:16.30px;color:#ffffff;">-40.0</div>
<div class="t" style="left:780.50px;top:345.69px;font-size:16.30px;color:#ffffff;">-60.0</div>
<div class="t" style="left:867.35px;top:360.10px;font-size:16.50px;color:#ffffff;">188</div>
<div class="t" style="left:959.32px;top:360.10px;font-size:16.50px;color:#ffffff;">188.2</div>
<div class="t" style="left:1057.94px;top:360.10px;font-size:16.50px;color:#ffffff;">188.4</div>
<div class="t" style="left:1156.81px;top:360.10px;font-size:16.50px;color:#ffffff;">188.6</div>
<div class="t" style="left:1255.58px;top:360.10px;font-size:16.50px;color:#ffffff;">188.8</div>
<div class="t" style="left:1361.25px;top:360.10px;font-size:16.50px;color:#ffffff;">189</div>
<div class="t" style="left:1453.17px;top:360.10px;font-size:16.50px;color:#ffffff;">189.2</div>
<div class="t" style="left:1551.79px;top:360.10px;font-size:16.50px;color:#ffffff;">189.4</div>
<div class="t" style="left:1650.66px;top:360.10px;font-size:16.50px;color:#ffffff;">189.6</div>
<div class="t" style="left:1749.43px;top:360.10px;font-size:16.50px;color:#ffffff;">189.8</div>
<div class="t" style="left:1261.42px;top:386.39px;font-size:20.20px;color:#ffffff;transform:scaleX(0.9869);">Frequency (MHz)</div>
<div class="t" style="left:744px;top:219px;font-size:19.5px;color:#fff;transform:translate(-50%,-50%) rotate(-90deg) scaleX(1.02);transform-origin:50% 50%;width:max-content">Magnitude (dB)</div>
<div class="r" style="left:0px;top:424px;width:1875px;height:6px;background:#8a8a8a;"></div>
<div class="r" style="left:0px;top:430px;width:1875px;height:49px;background:#252525;"></div>
<div class="r" style="left:218px;top:430px;width:401px;height:49px;background:#2d2d2d;"></div>
<div class="r" style="left:619px;top:430px;width:3px;height:49px;background:#f4f4f4;"></div>
<div class="r" style="left:0px;top:479px;width:1875px;height:2px;background:#b4bfca;"></div>
<div class="r" style="left:31.2px;top:443.3px;width:72.4px;height:25.2px;border:1px solid #8e8e8e;border-radius:3px"></div>
<div class="t" style="left:33.33px;top:447.54px;font-size:16.57px;color:#ffffff;transform:scaleX(0.9639);">7A</div>
<svg class="r" style="left:78px;top:452px" width="15" height="9" viewBox="0 0 15 9"><path d="M0.4 0.9 L14 0.9 L7.2 7.8 Z" fill="#fff"/></svg>
<div class="r" style="left:119.5px;top:430px;width:98.5px;height:49px;background:#aa1a1b;"></div>
<div class="t" style="left:138.19px;top:446.30px;font-size:19.33px;color:#f27a7a;transform:scaleX(0.9463);">Eld: 10F1</div>
<div class="t" style="left:242.47px;top:446.29px;font-size:19.77px;color:#e6e633;transform:scaleX(0.9578);">NDR NDS</div>
<div class="t" style="left:353.68px;top:446.29px;font-size:19.77px;color:#f2f2f2;transform:scaleX(1.0171);">2019-10-26</div>
<div class="t" style="left:466.63px;top:446.29px;font-size:19.77px;color:#f2f2f2;transform:scaleX(0.9603);">09:20:23 Z</div>
<div class="r" style="left:635.1px;top:443.5px;width:29px;height:25.5px;border:1px solid #8e8e8e;border-radius:3px"></div>
<svg class="r" style="left:643px;top:452px" width="15" height="9" viewBox="0 0 15 9"><path d="M0.4 0.9 L14 0.9 L7.2 7.8 Z" fill="#fff"/></svg>
<div class="r" style="left:695.5px;top:442.8px;width:29px;height:29px;border-radius:50%;background:#1f5d93"></div>
<div class="r" style="left:704px;top:451.3px;width:12px;height:12px;border-radius:50%;background:#ff0a0a"></div>
<div class="r" style="left:739px;top:442.8px;width:29px;height:29px;border-radius:50%;background:#1e3d5c"></div>
<div class="r" style="left:748px;top:451px;width:10px;height:13px;background:#141414;"></div>
<div class="r" style="left:1839px;top:441.5px;width:45px;height:25.5px;border:1px solid #8e8e8e;border-radius:4px"></div>
<div class="t" style="left:1840.75px;top:446.37px;font-size:15.99px;color:#ffffff;transform:scaleX(0.9609);">DAB</div>
<div class="r" style="left:0px;top:481px;width:1875px;height:489px;background:#1d5788;"></div>
<div class="r" style="left:0px;top:481px;width:216px;height:42px;background:#0f2d50;"></div>
<div class="r" style="left:0;top:481px;width:216px;height:42px;overflow:hidden">
<div class="t" style="left:5.09px;top:8.14px;font-size:25.15px;color:#f0f020;transform:scaleX(1.0568);">No Service Select</div>
</div>
<div class="r" style="left:216px;top:481px;width:6.300000000000011px;height:489px;background:#eceef0;"></div>
<div class="t" style="left:7.08px;top:532.13px;font-size:18.75px;color:#ffffff;transform:scaleX(1.0141);">NDR 2 NDS</div>
<div class="t" style="left:7.06px;top:563.83px;font-size:18.75px;color:#ffffff;transform:scaleX(1.0259);">NDR Blue</div>
<div class="t" style="left:7.04px;top:595.53px;font-size:18.75px;color:#ffffff;transform:scaleX(1.0400);">NDR Info NDS</div>
<div class="t" style="left:7.04px;top:627.23px;font-size:18.75px;color:#ffffff;transform:scaleX(1.0403);">NDR Info Spezial</div>
<div class="t" style="left:7.02px;top:658.93px;font-size:18.75px;color:#ffffff;transform:scaleX(1.0525);">NDR Kultur</div>
<div class="t" style="left:7.09px;top:690.63px;font-size:18.75px;color:#ffffff;transform:scaleX(1.0100);">NDR Plus</div>
<div class="t" style="left:7.08px;top:722.33px;font-size:18.75px;color:#ffffff;transform:scaleX(1.0139);">NDR1 NDS</div>
<div class="t" style="left:7.10px;top:754.03px;font-size:18.75px;color:#ffffff;transform:scaleX(1.0018);">N-JOY</div>
<div class="r" style="left:222.5px;top:481px;width:225.5px;height:42px;background:#0f2d50;"></div>
<div class="t" style="left:227.71px;top:490.42px;font-size:22.67px;color:#ffffff;transform:scaleX(1.1854);">Service Quality</div>
<div class="r" style="left:448px;top:481px;width:5.5px;height:489px;background:#b4c0cc;"></div>
<div class="r" style="left:448px;top:481px;width:1px;height:489px;background:#6a7a8a;"></div>
<div class="t" style="left:235.03px;top:543.26px;font-size:19.04px;color:#ffffff;transform:scaleX(0.8537);">SNR (dB)</div>
<div class="t" style="left:234.50px;top:581.26px;font-size:19.04px;color:#ffffff;transform:scaleX(0.8651);">FIC (ok %)</div>
<div class="t" style="left:234.51px;top:619.66px;font-size:19.04px;color:#ffffff;transform:scaleX(0.8570);">RS (ok %)</div>
<div class="t" style="left:234.40px;top:657.96px;font-size:19.04px;color:#ffffff;transform:scaleX(0.9351);">Null Symbol</div>
<div class="t" style="left:234.99px;top:696.46px;font-size:19.04px;color:#ffffff;transform:scaleX(0.9014);">SymbolTime (ms)</div>
<div class="t" style="left:234.46px;top:734.86px;font-size:19.04px;color:#ffffff;transform:scaleX(0.8927);">FrameTime (ms)</div>
<div class="r" style="left:384.5px;top:536.9px;width:50.30000000000001px;height:31.0px;background:#8a8a8a;"></div>
<div class="r" style="left:384.5px;top:536.9px;width:10.399999999999977px;height:31.0px;background:#ff0000;"></div>
<div class="t" style="left:399.95px;top:546.22px;font-size:14.20px;color:#f4f4f4;transform:scaleX(1.0000);">6.9</div>
<div class="r" style="left:384.5px;top:575.9px;width:50.30000000000001px;height:31.100000000000023px;background:#8a8a8a;"></div>
<div class="r" style="left:384.5px;top:575.9px;width:50.30000000000001px;height:31.100000000000023px;background:#008000;"></div>
<div class="t" style="left:401.90px;top:585.22px;font-size:14.20px;color:#f4f4f4;transform:scaleX(1.0000);">97</div>
<div class="r" style="left:384.5px;top:614.3px;width:50.30000000000001px;height:31.0px;background:#8a8a8a;"></div>
<div class="r" style="left:384.5px;top:652.5px;width:50.30000000000001px;height:31.0px;background:#8a8a8a;"></div>
<div class="r" style="left:384.5px;top:652.5px;width:50.30000000000001px;height:31.0px;background:#008000;"></div>
<div class="r" style="left:384.5px;top:690.8px;width:50.30000000000001px;height:30.90000000000009px;background:#8a8a8a;"></div>
<div class="r" style="left:384.5px;top:690.8px;width:7.0px;height:30.90000000000009px;background:#008000;"></div>
<div class="t" style="left:396.00px;top:700.12px;font-size:14.20px;color:#f4f4f4;transform:scaleX(1.0000);">0.20</div>
<div class="r" style="left:384.5px;top:729.2px;width:50.30000000000001px;height:31.0px;background:#8a8a8a;"></div>
<div class="r" style="left:384.5px;top:729.2px;width:32.0px;height:31.0px;background:#008000;"></div>
<div class="t" style="left:395.90px;top:738.52px;font-size:14.20px;color:#f4f4f4;transform:scaleX(1.0000);">96.0</div>
<div class="r" style="left:453.5px;top:481px;width:464.5px;height:42.700000000000045px;background:#0f2d50;"></div>
<div class="r" style="left:463px;top:489.4px;width:74.4px;height:34.3px;background:#8a8a8a;border-radius:3px 11px 0 0"></div>
<div class="r" style="left:538.5px;top:489.4px;width:51.7px;height:35px;background:#1d5788;border:1px solid #6f95b8;border-bottom:none;border-radius:3px 11px 0 0"></div>
<div class="r" style="left:593.4px;top:489.4px;width:86.2px;height:34.3px;background:#8a8a8a;border-radius:3px 11px 0 0"></div>
<div class="r" style="left:681.2px;top:489.4px;width:71.7px;height:34.3px;background:#8a8a8a;border-radius:3px 11px 0 0"></div>
<div class="r" style="left:754px;top:489.4px;width:107.0px;height:34.3px;background:#8a8a8a;border-radius:3px 11px 0 0"></div>
<div class="t" style="left:478.67px;top:496.99px;font-size:21.08px;color:#dcdcdc;transform:scaleX(0.9273);">Sync</div>
<div class="t" style="left:553.71px;top:496.99px;font-size:21.08px;color:#ffffff;transform:scaleX(0.9775);">TII</div>
<div class="t" style="left:609.40px;top:496.99px;font-size:21.08px;color:#dcdcdc;transform:scaleX(1.0358);">Audio</div>
<div class="t" style="left:697.41px;top:496.99px;font-size:21.08px;color:#dcdcdc;transform:scaleX(0.9363);">AAC</div>
<div class="t" style="left:769.26px;top:496.99px;font-size:21.08px;color:#dcdcdc;transform:scaleX(1.0352);">Options</div>
<div class="r" style="left:496.5px;top:536.5px;width:11px;height:11px;border-radius:50%;background:#ff0a0a"></div>
<div class="r" style="left:532.9px;top:536px;width:11.200000000000045px;height:11.700000000000045px;background:#10263f;"></div>
<div class="r" style="left:470.6px;top:559.5px;width:310.5px;height:1.2000000000000455px;background:#8ab0d2;"></div>
<div class="r" style="left:793px;top:524px;width:1px;height:35.5px;background:#5f88ae;"></div>
<div class="t" style="left:799.66px;top:544.86px;font-size:20.35px;color:#ffffff;transform:scaleX(0.8612);">Threshold</div>
<div class="t" style="left:470.59px;top:582.26px;font-size:19.91px;color:#ffffff;transform:scaleX(0.9445);">Pattern</div>
<div class="t" style="left:554.61px;top:582.26px;font-size:19.91px;color:#ffffff;transform:scaleX(0.9912);">MainId</div>
<div class="t" style="left:637.25px;top:582.26px;font-size:19.91px;color:#ffffff;transform:scaleX(0.9478);">SubId</div>
<div class="t" style="left:709.83px;top:582.26px;font-size:19.91px;color:#ffffff;transform:scaleX(0.9672);">Strength</div>
<div class="r" style="left:470.6px;top:604.6px;width:310.5px;height:1.1999999999999318px;background:#b6cde2;"></div>
<div class="t" style="left:473.33px;top:620.06px;font-size:19.91px;color:#ffffff;transform:scaleX(0.8406);">0x71</div>
<div class="t" style="left:558.05px;top:620.06px;font-size:19.91px;color:#ffffff;transform:scaleX(0.8088);">31</div>
<div class="t" style="left:639.68px;top:620.06px;font-size:19.91px;color:#ffffff;transform:scaleX(0.9231);">2</div>
<div class="t" style="left:712.82px;top:620.06px;font-size:19.91px;color:#ffffff;transform:scaleX(0.8468);">0.80</div>
<div class="r" style="left:834px;top:587px;width:2.2999999999999545px;height:140px;background:#e0e0e0;"></div>
<div class="r" style="left:827.50px;top:719.40px;width:15.60px;height:15.60px;border-radius:50%;background:linear-gradient(to bottom,#dadada 0%,#b4b4b4 45%,#747474 100%)"></div>
<div class="t" style="left:817.22px;top:742.86px;font-size:19.91px;color:#ffffff;transform:scaleX(0.8486);">0.02</div>
<div class="r" style="left:913.6px;top:523.7px;width:5.100000000000023px;height:446.29999999999995px;background:#1b5a93;"></div>
<div class="r" style="left:918.7px;top:481px;width:6.5px;height:489px;background:#eef0f2;"></div>
<div class="r" style="left:925px;top:481px;width:950px;height:25px;background:#0e2d50;"></div>
<div class="t" style="left:1289.11px;top:482.60px;font-size:18.02px;color:#ffffff;transform:scaleX(0.9903);">Channel Impulse Response (CIR)</div>
<div class="r" style="left:925px;top:506px;width:950px;height:243.5px;background:#000000;"></div>
<div class="r" style="left:925px;top:749.2px;width:950px;height:4.7999999999999545px;background:#8a8a8a;"></div>
<div class="r" style="left:925px;top:754px;width:950px;height:2.2000000000000455px;background:#8c9aaa;"></div>
<div class="r" style="left:925px;top:756.2px;width:950px;height:23.799999999999955px;background:#0e2d50;"></div>
<div class="r" style="left:925px;top:780px;width:950px;height:1px;background:#3a4a5c;"></div>
<div class="t" style="left:1378.73px;top:756.83px;font-size:19.19px;color:#ffffff;transform:scaleX(0.9168);">TII Carriers</div>
<div class="r" style="left:925px;top:781px;width:950px;height:181px;background:#000000;"></div>
<div class="r" style="left:925px;top:962px;width:950px;height:6px;background:#888888;"></div>
<div class="r" style="left:925px;top:968px;width:950px;height:2px;background:#1d5788;"></div>
<div class="r" style="left:937.70px;top:520.50px;width:15.60px;height:15.60px;border-radius:50%;background:#e6e6e6"></div>
<div class="t" style="left:957.88px;top:520.04px;font-size:15.26px;color:#ffffff;transform:scaleX(0.9300);">Freeze</div>
<div class="r" style="left:1026.20px;top:520.50px;width:15.60px;height:15.60px;border-radius:50%;background:#e6e6e6"></div>
<div class="t" style="left:1047.22px;top:520.04px;font-size:15.26px;color:#ffffff;transform:scaleX(0.9792);">Gradient</div>
<div class="t" style="left:942.84px;top:570.37px;font-size:15.99px;color:#ffffff;transform:scaleX(0.9412);">Smoothing Level</div>
<div class="r" style="left:946px;top:596.5px;width:1px;height:4.0px;background:#bdbdbd;"></div>
<div class="r" style="left:962px;top:596.5px;width:1px;height:4.0px;background:#bdbdbd;"></div>
<div class="r" style="left:979px;top:596.5px;width:1px;height:4.0px;background:#bdbdbd;"></div>
<div class="r" style="left:995px;top:596.5px;width:1px;height:4.0px;background:#bdbdbd;"></div>
<div class="r" style="left:1012px;top:596.5px;width:1px;height:4.0px;background:#bdbdbd;"></div>
<div class="r" style="left:1028px;top:596.5px;width:1px;height:4.0px;background:#bdbdbd;"></div>
<div class="r" style="left:1044px;top:596.5px;width:1px;height:4.0px;background:#bdbdbd;"></div>
<div class="r" style="left:1061px;top:596.5px;width:1px;height:4.0px;background:#bdbdbd;"></div>
<div class="r" style="left:1077px;top:596.5px;width:1px;height:4.0px;background:#bdbdbd;"></div>
<div class="r" style="left:1094px;top:596.5px;width:1px;height:4.0px;background:#bdbdbd;"></div>
<div class="r" style="left:1110px;top:596.5px;width:1px;height:4.0px;background:#bdbdbd;"></div>
<div class="r" style="left:938px;top:608.2px;width:172px;height:2.5px;background:#e6e6e6;"></div>
<div class="r" style="left:1019.50px;top:600.90px;width:17.00px;height:17.00px;border-radius:50%;background:linear-gradient(to bottom,#dadada 0%,#b4b4b4 45%,#747474 100%)"></div>
<div class="t" style="left:943.03px;top:638.37px;font-size:15.99px;color:#ffffff;transform:scaleX(0.9347);">Zoom X</div>
<div class="r" style="left:938px;top:670px;width:172px;height:2.5px;background:#e6e6e6;"></div>
<div class="r" style="left:937.50px;top:662.80px;width:17.00px;height:17.00px;border-radius:50%;background:linear-gradient(to bottom,#dadada 0%,#b4b4b4 45%,#747474 100%)"></div>
<div class="t" style="left:943.03px;top:700.37px;font-size:15.99px;color:#ffffff;transform:scaleX(0.9381);">Zoom Y</div>
<div class="r" style="left:938px;top:732.8px;width:172px;height:2.5px;background:#e6e6e6;"></div>
<div class="r" style="left:937.50px;top:725.50px;width:17.00px;height:17.00px;border-radius:50%;background:linear-gradient(to bottom,#dadada 0%,#b4b4b4 45%,#747474 100%)"></div>
<div class="r" style="left:1117.6px;top:507px;width:6px;height:163px;border-radius:3px;background:#a8a8a8"></div>
<div class="r" style="left:1131px;top:506px;width:1px;height:243.5px;background:#1c1c1c;"></div>
<svg class="r" style="left:925px;top:506px" width="950" height="244" viewBox="925 506 950 244">
<rect x="1257.7" y="524.5" width="102.3" height="171.0" fill="#3c3c3c"/>
<path d="M1247.5,558.7 H1867 M1247.5,592.9 H1867 M1247.5,627.1 H1867 M1247.5,661.3 H1867 M1276.7,524.5 V695.5 M1318.0,524.5 V695.5 M1359.4,524.5 V695.5 M1400.7,524.5 V695.5 M1442.0,524.5 V695.5 M1483.4,524.5 V695.5 M1524.7,524.5 V695.5 M1566.1,524.5 V695.5 M1607.4,524.5 V695.5 M1648.7,524.5 V695.5 M1690.1,524.5 V695.5 M1731.4,524.5 V695.5 M1772.8,524.5 V695.5 M1814.1,524.5 V695.5 M1855.4,524.5 V695.5" stroke="#8e8e8e" stroke-width="1.2" fill="none"/>
<rect x="1247.5" y="524.5" width="619.5" height="171.0" fill="none" stroke="#9a9a9a" stroke-width="1.8"/>
<line x1="1360" y1="524.5" x2="1360" y2="695.5" stroke="#e8e830" stroke-width="1.3" stroke-dasharray="1.5 1.5"/>
<line x1="1595" y1="524.5" x2="1595" y2="695.5" stroke="#c81e1e" stroke-width="1.4"/>
<polyline points="1248.5,666.6 1249.8,672.6 1251.1,666.1 1252.4,673.4 1253.7,662.9 1255.0,672.9 1256.3,681.6 1257.6,675.1 1258.9,686.3 1260.2,674.0 1261.5,675.1 1262.8,671.7 1264.1,674.7 1265.4,678.6 1266.7,667.9 1268.0,661.5 1269.3,659.1 1270.6,661.4 1271.9,682.3 1273.2,679.3 1274.5,677.4 1275.8,674.5 1277.1,671.5 1278.4,674.0 1279.7,682.3 1281.0,681.7 1282.3,680.9 1283.6,682.3 1284.9,685.4 1286.2,677.8 1287.5,680.8 1288.8,683.8 1290.1,682.7 1291.4,679.2 1292.7,675.4 1294.0,668.7 1295.3,676.6 1296.6,679.9 1297.9,680.4 1299.2,678.3 1300.5,682.8 1301.8,678.8 1303.1,676.7 1304.4,675.6 1305.7,691.0 1307.0,682.9 1308.3,676.0 1309.6,675.4 1310.9,680.4 1312.2,678.9 1313.5,672.1 1314.8,676.1 1316.1,663.8 1317.4,670.7 1318.7,676.5 1320.0,676.9 1321.3,668.4 1322.6,681.3 1323.9,677.8 1325.2,674.6 1326.5,686.8 1327.8,683.2 1329.1,679.7 1330.4,669.8 1331.7,677.8 1333.0,677.5 1334.3,664.2 1335.6,664.3 1336.9,670.6 1338.2,675.7 1339.5,672.5 1340.8,676.0 1342.1,670.4 1343.4,667.8 1344.7,674.8 1346.0,668.9 1347.3,672.9 1348.6,683.7 1349.9,669.4 1351.2,680.7 1352.5,668.9 1353.8,668.9 1355.1,672.8 1356.4,665.0 1357.7,662.7 1359.0,662.3 1360.3,664.3 1361.6,672.5 1362.9,668.6 1364.2,671.8 1365.5,668.2 1366.8,663.4 1368.1,675.6 1369.4,683.4 1370.7,675.7 1372.0,671.9 1373.3,665.9 1374.6,676.7 1375.9,680.9 1377.2,673.2 1378.5,668.5 1379.8,659.8 1381.1,667.2 1382.4,669.7 1383.7,671.2 1385.0,675.4 1386.3,666.4 1387.6,666.9 1388.9,669.0 1390.2,659.5 1391.5,650.3 1392.8,635.8 1394.1,649.3 1395.4,657.9 1396.7,647.4 1398.0,633.7 1399.3,605.1 1400.6,597.1 1401.9,599.1 1403.2,626.2 1404.5,653.3 1405.8,666.5 1407.1,668.1 1408.4,657.6 1409.7,652.2 1411.0,651.3 1412.3,656.6 1413.6,665.7 1414.9,672.5 1416.2,667.4 1417.5,663.3 1418.8,668.1 1420.1,669.9 1421.4,668.6 1422.7,675.8 1424.0,672.1 1425.3,673.9 1426.6,667.8 1427.9,662.4 1429.2,663.2 1430.5,667.2 1431.8,675.6 1433.1,680.1 1434.4,664.7 1435.7,666.9 1437.0,672.2 1438.3,677.9 1439.6,672.6 1440.9,667.7 1442.2,664.2 1443.5,675.7 1444.8,684.7 1446.1,669.9 1447.4,670.6 1448.7,670.4 1450.0,677.7 1451.3,665.4 1452.6,667.8 1453.9,669.6 1455.2,670.8 1456.5,670.6 1457.8,672.2 1459.1,663.3 1460.4,668.9 1461.7,676.4 1463.0,676.6 1464.3,678.2 1465.6,675.2 1466.9,666.3 1468.2,671.3 1469.5,672.7 1470.8,673.9 1472.1,681.3 1473.4,680.5 1474.7,673.4 1476.0,666.8 1477.3,668.2 1478.6,675.5 1479.9,669.0 1481.2,662.9 1482.5,666.1 1483.8,663.6 1485.1,677.4 1486.4,677.2 1487.7,678.9 1489.0,675.3 1490.3,671.9 1491.6,676.9 1492.9,675.1 1494.2,673.8 1495.5,675.8 1496.8,670.0 1498.1,669.7 1499.4,677.9 1500.7,680.1 1502.0,676.9 1503.3,668.3 1504.6,668.0 1505.9,665.9 1507.2,673.5 1508.5,665.5 1509.8,671.3 1511.1,674.0 1512.4,669.5 1513.7,675.2 1515.0,674.0 1516.3,681.4 1517.6,674.6 1518.9,677.6 1520.2,674.1 1521.5,673.4 1522.8,673.4 1524.1,668.8 1525.4,672.8 1526.7,663.8 1528.0,671.9 1529.3,663.5 1530.6,659.7 1531.9,666.7 1533.2,670.1 1534.5,664.3 1535.8,665.2 1537.1,671.1 1538.4,673.9 1539.7,677.5 1541.0,688.5 1542.3,672.6 1543.6,671.3 1544.9,665.0 1546.2,667.4 1547.5,663.0 1548.8,673.4 1550.1,669.3 1551.4,673.8 1552.7,671.4 1554.0,676.5 1555.3,669.1 1556.6,667.5 1557.9,664.2 1559.2,677.0 1560.5,678.8 1561.8,669.6 1563.1,672.7 1564.4,679.1 1565.7,671.2 1567.0,671.8 1568.3,671.9 1569.6,671.2 1570.9,675.3 1572.2,667.1 1573.5,676.6 1574.8,668.1 1576.1,665.0 1577.4,664.1 1578.7,675.0 1580.0,667.9 1581.3,672.5 1582.6,664.0 1583.9,670.6 1585.2,673.7 1586.5,671.7 1587.8,675.8 1589.1,665.3 1590.4,674.5 1591.7,680.7 1593.0,676.8 1594.3,666.2 1595.6,682.3 1596.9,681.9 1598.2,681.3 1599.5,674.2 1600.8,677.7 1602.1,668.4 1603.4,668.8 1604.7,663.8 1606.0,670.1 1607.3,669.3 1608.6,671.0 1609.9,678.6 1611.2,668.6 1612.5,668.0 1613.8,681.8 1615.1,689.2 1616.4,676.2 1617.7,677.2 1619.0,662.7 1620.3,664.1 1621.6,677.5 1622.9,672.7 1624.2,667.3 1625.5,671.3 1626.8,668.6 1628.1,664.3 1629.4,663.9 1630.7,661.7 1632.0,665.6 1633.3,682.1 1634.6,675.7 1635.9,685.6 1637.2,676.7 1638.5,674.8 1639.8,667.9 1641.1,663.4 1642.4,666.0 1643.7,672.1 1645.0,669.6 1646.3,666.4 1647.6,666.0 1648.9,665.1 1650.2,667.7 1651.5,678.4 1652.8,667.3 1654.1,667.6 1655.4,671.6 1656.7,666.7 1658.0,673.9 1659.3,672.7 1660.6,672.9 1661.9,670.5 1663.2,670.8 1664.5,658.8 1665.8,666.8 1667.1,663.1 1668.4,666.1 1669.7,679.0 1671.0,676.8 1672.3,668.2 1673.6,667.2 1674.9,669.7 1676.2,675.7 1677.5,677.0 1678.8,670.1 1680.1,673.1 1681.4,669.5 1682.7,668.3 1684.0,665.4 1685.3,677.8 1686.6,679.9 1687.9,676.8 1689.2,675.3 1690.5,680.8 1691.8,679.7 1693.1,673.5 1694.4,669.3 1695.7,674.5 1697.0,671.5 1698.3,674.1 1699.6,681.2 1700.9,677.2 1702.2,681.8 1703.5,670.3 1704.8,677.9 1706.1,675.5 1707.4,664.9 1708.7,670.8 1710.0,666.0 1711.3,678.6 1712.6,682.6 1713.9,672.9 1715.2,678.1 1716.5,664.6 1717.8,665.7 1719.1,674.7 1720.4,667.7 1721.7,665.1 1723.0,673.3 1724.3,674.1 1725.6,677.2 1726.9,678.1 1728.2,683.5 1729.5,670.5 1730.8,671.1 1732.1,670.7 1733.4,664.0 1734.7,669.7 1736.0,673.8 1737.3,673.5 1738.6,674.6 1739.9,680.4 1741.2,674.9 1742.5,680.2 1743.8,664.4 1745.1,671.5 1746.4,674.0 1747.7,675.1 1749.0,664.5 1750.3,664.3 1751.6,665.5 1752.9,661.3 1754.2,664.0 1755.5,673.2 1756.8,674.3 1758.1,660.7 1759.4,663.3 1760.7,680.0 1762.0,674.5 1763.3,665.0 1764.6,664.5 1765.9,648.7 1767.2,651.9 1768.5,648.2 1769.8,650.9 1771.1,665.7 1772.4,669.2 1773.7,672.7 1775.0,658.5 1776.3,669.1 1777.6,676.8 1778.9,682.4 1780.2,679.9 1781.5,682.3 1782.8,675.9 1784.1,669.3 1785.4,676.0 1786.7,675.9 1788.0,674.2 1789.3,675.7 1790.6,674.7 1791.9,667.6 1793.2,678.3 1794.5,673.7 1795.8,676.6 1797.1,667.0 1798.4,666.4 1799.7,672.8 1801.0,660.3 1802.3,665.8 1803.6,675.0 1804.9,671.2 1806.2,666.4 1807.5,685.2 1808.8,678.8 1810.1,672.3 1811.4,670.1 1812.7,670.3 1814.0,666.1 1815.3,668.4 1816.6,665.0 1817.9,669.6 1819.2,661.6 1820.5,661.2 1821.8,666.0 1823.1,662.4 1824.4,673.2 1825.7,673.4 1827.0,678.0 1828.3,677.2 1829.6,673.2 1830.9,676.0 1832.2,667.4 1833.5,666.9 1834.8,669.0 1836.1,669.1 1837.4,665.8 1838.7,676.0 1840.0,668.4 1841.3,676.0 1842.6,672.5 1843.9,676.0 1845.2,664.5 1846.5,668.7 1847.8,679.0 1849.1,678.0 1850.4,674.4 1851.7,679.7 1853.0,680.7 1854.3,671.1 1855.6,682.0 1856.9,671.8 1858.2,676.4 1859.5,665.7 1860.8,667.9 1862.1,665.6 1863.4,680.9 1864.7,685.2 1866.0,670.6" fill="none" stroke="#f0f0f0" stroke-width="1.2" stroke-linejoin="round"/>
<circle cx="1400.7" cy="596.3" r="4.8" fill="#f4ec10"/>
<circle cx="1360" cy="658.8" r="4.8" fill="#2aa6d8"/>
<circle cx="1411" cy="653.3" r="4.8" fill="#e01414"/>
</svg>
<div class="t" style="left:1201.50px;top:516.16px;font-size:16.00px;color:#ffffff;">-10.0</div>
<div class="t" style="left:1201.50px;top:550.36px;font-size:16.00px;color:#ffffff;">-20.0</div>
<div class="t" style="left:1201.50px;top:584.56px;font-size:16.00px;color:#ffffff;">-30.0</div>
<div class="t" style="left:1201.50px;top:618.76px;font-size:16.00px;color:#ffffff;">-40.0</div>
<div class="t" style="left:1201.50px;top:652.96px;font-size:16.00px;color:#ffffff;">-50.0</div>
<div class="t" style="left:1201.50px;top:687.16px;font-size:16.00px;color:#ffffff;">-60.0</div>
<div class="t" style="left:1266.83px;top:699.77px;font-size:13.60px;color:#ffffff;">-60</div>
<div class="t" style="left:1308.17px;top:699.77px;font-size:13.60px;color:#ffffff;">-40</div>
<div class="t" style="left:1349.51px;top:699.77px;font-size:13.60px;color:#ffffff;">-20</div>
<div class="t" style="left:1396.95px;top:699.77px;font-size:13.60px;color:#ffffff;">0</div>
<div class="t" style="left:1434.39px;top:699.77px;font-size:13.60px;color:#ffffff;">20</div>
<div class="t" style="left:1475.93px;top:699.77px;font-size:13.60px;color:#ffffff;">40</div>
<div class="t" style="left:1517.07px;top:699.77px;font-size:13.60px;color:#ffffff;">60</div>
<div class="t" style="left:1558.46px;top:699.77px;font-size:13.60px;color:#ffffff;">80</div>
<div class="t" style="left:1595.85px;top:699.77px;font-size:13.60px;color:#ffffff;">100</div>
<div class="t" style="left:1637.19px;top:699.77px;font-size:13.60px;color:#ffffff;">120</div>
<div class="t" style="left:1678.53px;top:699.77px;font-size:13.60px;color:#ffffff;">140</div>
<div class="t" style="left:1719.87px;top:699.77px;font-size:13.60px;color:#ffffff;">160</div>
<div class="t" style="left:1761.21px;top:699.77px;font-size:13.60px;color:#ffffff;">180</div>
<div class="t" style="left:1802.70px;top:699.77px;font-size:13.60px;color:#ffffff;">200</div>
<div class="t" style="left:1844.04px;top:699.77px;font-size:13.60px;color:#ffffff;">220</div>
<div class="t" style="left:1463.60px;top:718.50px;font-size:17.15px;color:#ffffff;transform:scaleX(0.9984);">Distance Difference (km)</div>
<div class="t" style="left:1173px;top:611px;font-size:16px;font-weight:bold;color:#fff;transform:translate(-50%,-50%) rotate(-90deg);transform-origin:50% 50%;width:max-content">Magnitude (dB)</div>
<svg class="r" style="left:925px;top:781px" width="950" height="181" viewBox="925 781 950 181">
<path d="M1035,885.3 H1859.5 M1035,863.5 H1859.5 M1035,841.8 H1859.5 M1035,820.0 H1859.5 M1085.7,798.3 V907 M1166.2,798.3 V907 M1246.7,798.3 V907 M1327.2,798.3 V907 M1407.7,798.3 V907 M1488.2,798.3 V907 M1568.7,798.3 V907 M1649.2,798.3 V907 M1729.7,798.3 V907 M1810.2,798.3 V907" stroke="#8e8e8e" stroke-width="1.2" fill="none"/>
<rect x="1035" y="798.3" width="824.5" height="108.70000000000005" fill="none" stroke="#9a9a9a" stroke-width="1.8"/>
<line x1="1035" y1="798.3" x2="1035" y2="907" stroke="#c82020" stroke-width="1.8"/>
<line x1="1138.8" y1="798.3" x2="1138.8" y2="907" stroke="#e8e820" stroke-width="1.8" stroke-dasharray="1.6 2"/>
<line x1="1293.3" y1="798.3" x2="1293.3" y2="907" stroke="#e8e820" stroke-width="1.8" stroke-dasharray="1.6 2"/>
<line x1="1447.9" y1="798.3" x2="1447.9" y2="907" stroke="#e8e820" stroke-width="1.8" stroke-dasharray="1.6 2"/>
<line x1="1602.5" y1="798.3" x2="1602.5" y2="907" stroke="#e8e820" stroke-width="1.8" stroke-dasharray="1.6 2"/>
<line x1="1757.0" y1="798.3" x2="1757.0" y2="907" stroke="#e8e820" stroke-width="1.8" stroke-dasharray="1.6 2"/>
<path d="M1160.4,907 V814.8 M1179.5,907 V799.4 M1198.8,907 V810.6 M1275.9,907 V854.8 M1314.7,907 V838.5 M1334.3,907 V842.3 M1353.2,907 V826.1 M1430.7,907 V846.1 M1488.9,907 V858.1 M1624.3,907 V865.7 M1643.6,907 V851.6 M1663.0,907 V866.8 M1740.4,907 V874.4" stroke="#f6f6f6" stroke-width="1.7" fill="none"/>
<path d="M1154.7,907 V891.8 M1183.8,907 V890.7 M1189.7,907 V883.1 M1192.3,907 V886.3 M1229.8,907 V891.8 M1232.9,907 V891.2 M1238.9,907 V897.2 M1243.5,907 V891.8 M1246.4,907 V885.3 M1265.7,907 V889.6 M1271.7,907 V890.2 M1278.5,907 V883.1 M1283.1,907 V885.3 M1323.7,907 V888.5 M1365.5,907 V894.0 M1383.8,907 V894.0 M1415.0,907 V877.7 M1421.9,907 V890.7 M1427.8,907 V885.3 M1440.6,907 V887.4 M1469.9,907 V880.2 M1508.3,907 V880.4 M1511.3,907 V885.3 M1521.3,907 V882.0 M1477.8,907 V889.6 M1453.7,907 V896.1 M1493.7,907 V897.2 M1514.8,907 V891.8 M1517.4,907 V894.0 M1545.2,907 V886.3 M1561.1,907 V886.3 M1565.8,907 V896.1 M1569.9,907 V885.3 M1576.0,907 V894.0 M1585.2,907 V879.8 M1590.5,907 V892.9 M1609.0,907 V890.7 M1626.6,907 V888.5 M1638.0,907 V891.8 M1651.2,907 V896.1 M1672.8,907 V896.1 M1685.2,907 V887.4 M1712.8,907 V891.8 M1718.1,907 V890.7 M1751.9,907 V898.3 M1149.0,907 V901.6 M1168.0,907 V898.3 M1210.0,907 V900.5 M1256.0,907 V899.4 M1300.0,907 V898.3 M1343.0,907 V896.1 M1372.0,907 V897.2 M1395.0,907 V899.4 M1458.0,907 V896.1 M1532.0,907 V897.2 M1600.0,907 V900.5 M1700.0,907 V898.3 M1728.0,907 V896.1" stroke="#cfcfcf" stroke-width="1.5" fill="none"/>
<path d="M1152.1,907 V898.1 M1155.1,907 V905.0 M1156.1,907 V906.9 M1158.1,907 V902.2 M1159.1,907 V905.4 M1161.1,907 V898.7 M1163.1,907 V905.5 M1164.1,907 V905.7 M1166.2,907 V904.7 M1168.2,907 V896.4 M1172.2,907 V901.6 M1175.2,907 V904.9 M1176.2,907 V905.9 M1177.2,907 V905.2 M1178.2,907 V906.8 M1180.2,907 V906.8 M1181.2,907 V905.2 M1182.2,907 V903.0 M1183.3,907 V906.6 M1185.3,907 V905.7 M1188.3,907 V906.1 M1190.3,907 V903.5 M1191.3,907 V903.0 M1192.3,907 V898.4 M1196.3,907 V904.2 M1198.4,907 V903.3 M1202.4,907 V905.4 M1203.4,907 V906.4 M1206.4,907 V902.8 M1207.4,907 V904.8 M1208.4,907 V906.3 M1209.4,907 V905.6 M1212.4,907 V896.3 M1214.5,907 V903.6 M1215.5,907 V901.1 M1216.5,907 V903.0 M1217.5,907 V899.0 M1218.5,907 V904.1 M1219.5,907 V905.9 M1224.5,907 V905.3 M1225.5,907 V902.7 M1226.5,907 V901.1 M1227.5,907 V899.6 M1229.5,907 V907.0 M1230.6,907 V906.4 M1231.6,907 V902.7 M1232.6,907 V904.8 M1236.6,907 V904.1 M1237.6,907 V904.4 M1240.6,907 V905.4 M1246.7,907 V906.1 M1247.7,907 V904.0 M1250.7,907 V901.8 M1252.7,907 V905.2 M1254.7,907 V905.0 M1258.7,907 V903.3 M1262.8,907 V902.8 M1268.8,907 V900.6 M1271.8,907 V904.8 M1273.8,907 V901.3 M1277.8,907 V902.3 M1280.9,907 V902.4 M1281.9,907 V901.9 M1282.9,907 V905.0 M1285.9,907 V904.3 M1286.9,907 V906.5 M1287.9,907 V906.0 M1288.9,907 V904.8 M1289.9,907 V903.4 M1292.9,907 V906.2 M1295.0,907 V904.5 M1296.0,907 V905.3 M1297.0,907 V905.2 M1298.0,907 V903.8 M1300.0,907 V903.7 M1304.0,907 V906.0 M1307.0,907 V903.8 M1312.1,907 V903.0 M1314.1,907 V903.2 M1316.1,907 V903.9 M1319.1,907 V904.5 M1320.1,907 V905.9 M1322.1,907 V898.8 M1324.1,907 V905.0 M1326.1,907 V904.1 M1328.2,907 V905.3 M1329.2,907 V905.1 M1331.2,907 V906.7 M1332.2,907 V905.6 M1333.2,907 V900.0 M1335.2,907 V900.9 M1336.2,907 V904.4 M1337.2,907 V900.6 M1338.2,907 V897.6 M1340.2,907 V903.8 M1342.2,907 V902.9 M1344.3,907 V903.6 M1345.3,907 V906.3 M1347.3,907 V903.0 M1349.3,907 V902.2 M1350.3,907 V898.8 M1353.3,907 V904.7 M1355.3,907 V901.7 M1357.3,907 V904.3 M1359.4,907 V901.2 M1360.4,907 V902.3 M1361.4,907 V906.3 M1364.4,907 V905.8 M1365.4,907 V905.4 M1366.4,907 V898.8 M1367.4,907 V902.7 M1368.4,907 V905.6 M1369.4,907 V901.0 M1370.4,907 V903.4 M1371.4,907 V904.1 M1373.4,907 V900.9 M1378.5,907 V905.5 M1382.5,907 V904.8 M1383.5,907 V905.1 M1385.5,907 V905.9 M1386.5,907 V906.2 M1387.5,907 V906.2 M1388.5,907 V905.8 M1392.6,907 V906.4 M1393.6,907 V905.0 M1394.6,907 V902.3 M1396.6,907 V901.5 M1397.6,907 V905.0 M1403.6,907 V904.2 M1406.6,907 V906.1 M1407.7,907 V902.7 M1408.7,907 V902.5 M1411.7,907 V906.2 M1412.7,907 V905.6 M1414.7,907 V903.9 M1415.7,907 V904.0 M1417.7,907 V906.8 M1418.7,907 V905.8 M1421.7,907 V899.4 M1424.8,907 V900.2 M1426.8,907 V906.7 M1428.8,907 V903.6 M1429.8,907 V902.3 M1432.8,907 V901.6 M1438.8,907 V906.2 M1439.9,907 V906.4 M1440.9,907 V903.7 M1442.9,907 V904.2 M1443.9,907 V902.9 M1444.9,907 V903.6 M1445.9,907 V905.2 M1446.9,907 V905.7 M1447.9,907 V901.1 M1448.9,907 V901.8 M1449.9,907 V906.6 M1450.9,907 V904.8 M1451.9,907 V906.0 M1453.9,907 V906.9 M1458.0,907 V905.2 M1460.0,907 V906.4 M1463.0,907 V906.7 M1464.0,907 V906.2 M1465.0,907 V898.7 M1466.0,907 V901.0 M1467.0,907 V904.0 M1470.0,907 V906.4 M1471.0,907 V902.8 M1473.1,907 V899.0 M1475.1,907 V900.9 M1476.1,907 V904.5 M1477.1,907 V896.0 M1479.1,907 V903.6 M1480.1,907 V899.7 M1481.1,907 V903.5 M1483.1,907 V906.9 M1484.1,907 V905.8 M1485.1,907 V906.9 M1486.1,907 V903.1 M1487.1,907 V897.1 M1488.2,907 V904.6 M1490.2,907 V905.4 M1491.2,907 V906.7 M1492.2,907 V898.7 M1495.2,907 V904.8 M1496.2,907 V902.7 M1498.2,907 V905.9 M1502.2,907 V900.2 M1503.2,907 V904.8 M1504.2,907 V906.4 M1507.3,907 V905.5 M1508.3,907 V904.5 M1509.3,907 V905.6 M1510.3,907 V904.5 M1511.3,907 V905.7 M1513.3,907 V906.0 M1514.3,907 V904.0 M1515.3,907 V904.1 M1522.4,907 V905.4 M1528.4,907 V905.6 M1529.4,907 V903.5 M1530.4,907 V905.6 M1532.4,907 V904.4 M1533.4,907 V906.6 M1534.4,907 V902.2 M1535.4,907 V904.6 M1539.5,907 V904.4 M1540.5,907 V904.8 M1541.5,907 V904.4 M1545.5,907 V904.7 M1547.5,907 V906.6 M1550.5,907 V903.5 M1551.5,907 V899.3 M1552.6,907 V900.9 M1557.6,907 V904.7 M1559.6,907 V897.1 M1560.6,907 V903.6 M1562.6,907 V904.2 M1563.6,907 V904.4 M1564.6,907 V905.5 M1565.6,907 V902.3 M1567.6,907 V905.3 M1572.7,907 V904.7 M1573.7,907 V904.8 M1574.7,907 V903.2 M1575.7,907 V902.1 M1577.7,907 V903.5 M1579.7,907 V903.9 M1582.7,907 V900.1 M1583.7,907 V902.0 M1584.8,907 V906.6 M1585.8,907 V906.6 M1586.8,907 V906.2 M1587.8,907 V901.1 M1588.8,907 V906.1 M1596.8,907 V902.2 M1598.8,907 V903.8 M1599.8,907 V904.0 M1603.9,907 V905.1 M1605.9,907 V906.7 M1614.9,907 V905.6 M1618.0,907 V902.3 M1619.0,907 V906.2 M1620.0,907 V905.2 M1625.0,907 V905.5 M1626.0,907 V905.2 M1628.0,907 V902.5 M1630.0,907 V906.0 M1633.1,907 V904.2 M1636.1,907 V902.5 M1640.1,907 V905.1 M1641.1,907 V898.9 M1642.1,907 V905.5 M1643.1,907 V899.2 M1644.1,907 V900.9 M1645.1,907 V903.3 M1647.1,907 V903.8 M1648.1,907 V902.5 M1651.2,907 V903.9 M1652.2,907 V902.2 M1653.2,907 V898.8 M1657.2,907 V904.6 M1658.2,907 V900.1 M1659.2,907 V906.2 M1660.2,907 V904.9 M1661.2,907 V905.7 M1671.3,907 V905.8 M1672.3,907 V904.6 M1673.3,907 V906.0 M1674.3,907 V904.3 M1675.3,907 V901.3 M1676.3,907 V903.4 M1677.3,907 V906.0 M1679.3,907 V905.2 M1682.4,907 V902.9 M1685.4,907 V903.8 M1686.4,907 V904.1 M1689.4,907 V905.9 M1693.4,907 V902.7 M1694.4,907 V904.3 M1695.4,907 V903.2 M1696.4,907 V906.6 M1697.5,907 V901.4 M1698.5,907 V903.4 M1701.5,907 V904.5 M1703.5,907 V902.7 M1704.5,907 V901.5 M1706.5,907 V904.1 M1707.5,907 V906.7 M1708.5,907 V905.7 M1709.5,907 V906.9 M1711.5,907 V905.4 M1712.5,907 V906.7 M1716.6,907 V901.8 M1717.6,907 V902.9 M1722.6,907 V900.6 M1723.6,907 V906.0 M1727.6,907 V900.6 M1729.7,907 V907.0 M1731.7,907 V895.0 M1732.7,907 V904.9 M1733.7,907 V906.4 M1734.7,907 V902.8 M1736.7,907 V905.0 M1737.7,907 V903.3 M1738.7,907 V900.7 M1739.7,907 V902.2 M1740.7,907 V902.4 M1742.7,907 V898.5 M1743.7,907 V899.1 M1744.7,907 V902.7 M1745.8,907 V904.3 M1747.8,907 V905.7 M1749.8,907 V896.7 M1751.8,907 V905.8 M1752.8,907 V904.7 M1753.8,907 V904.1 M1754.8,907 V898.4 M1755.8,907 V902.1" stroke="#a8a8a8" stroke-width="1.2" fill="none"/>
</svg>
<div class="t" style="left:1000.30px;top:789.96px;font-size:16.00px;color:#ffffff;">1.0</div>
<div class="t" style="left:1000.40px;top:811.70px;font-size:16.00px;color:#ffffff;">0.8</div>
<div class="t" style="left:1000.40px;top:833.44px;font-size:16.00px;color:#ffffff;">0.6</div>
<div class="t" style="left:1000.20px;top:855.18px;font-size:16.00px;color:#ffffff;">0.4</div>
<div class="t" style="left:1000.50px;top:876.92px;font-size:16.00px;color:#ffffff;">0.2</div>
<div class="t" style="left:1000.30px;top:898.66px;font-size:16.00px;color:#ffffff;">0.0</div>
<div class="t" style="left:1069.60px;top:911.86px;font-size:16.00px;color:#ffffff;">-900</div>
<div class="t" style="left:1150.10px;top:911.86px;font-size:16.00px;color:#ffffff;">-700</div>
<div class="t" style="left:1230.60px;top:911.86px;font-size:16.00px;color:#ffffff;">-500</div>
<div class="t" style="left:1311.10px;top:911.86px;font-size:16.00px;color:#ffffff;">-300</div>
<div class="t" style="left:1391.60px;top:911.86px;font-size:16.00px;color:#ffffff;">-100</div>
<div class="t" style="left:1474.50px;top:911.86px;font-size:16.00px;color:#ffffff;">100</div>
<div class="t" style="left:1555.30px;top:911.86px;font-size:16.00px;color:#ffffff;">300</div>
<div class="t" style="left:1635.80px;top:911.86px;font-size:16.00px;color:#ffffff;">500</div>
<div class="t" style="left:1716.20px;top:911.86px;font-size:16.00px;color:#ffffff;">700</div>
<div class="t" style="left:1796.75px;top:911.86px;font-size:16.00px;color:#ffffff;">900</div>
<div class="t" style="left:1396.14px;top:933.93px;font-size:18.75px;color:#ffffff;transform:scaleX(0.9076);">TII Subcarrier</div>
<div class="t" style="left:973px;top:851.5px;font-size:15px;font-weight:bold;color:#fff;transform:translate(-50%,-50%) rotate(-90deg);transform-origin:50% 50%;width:max-content">Magnitude</div>
</body></html>
